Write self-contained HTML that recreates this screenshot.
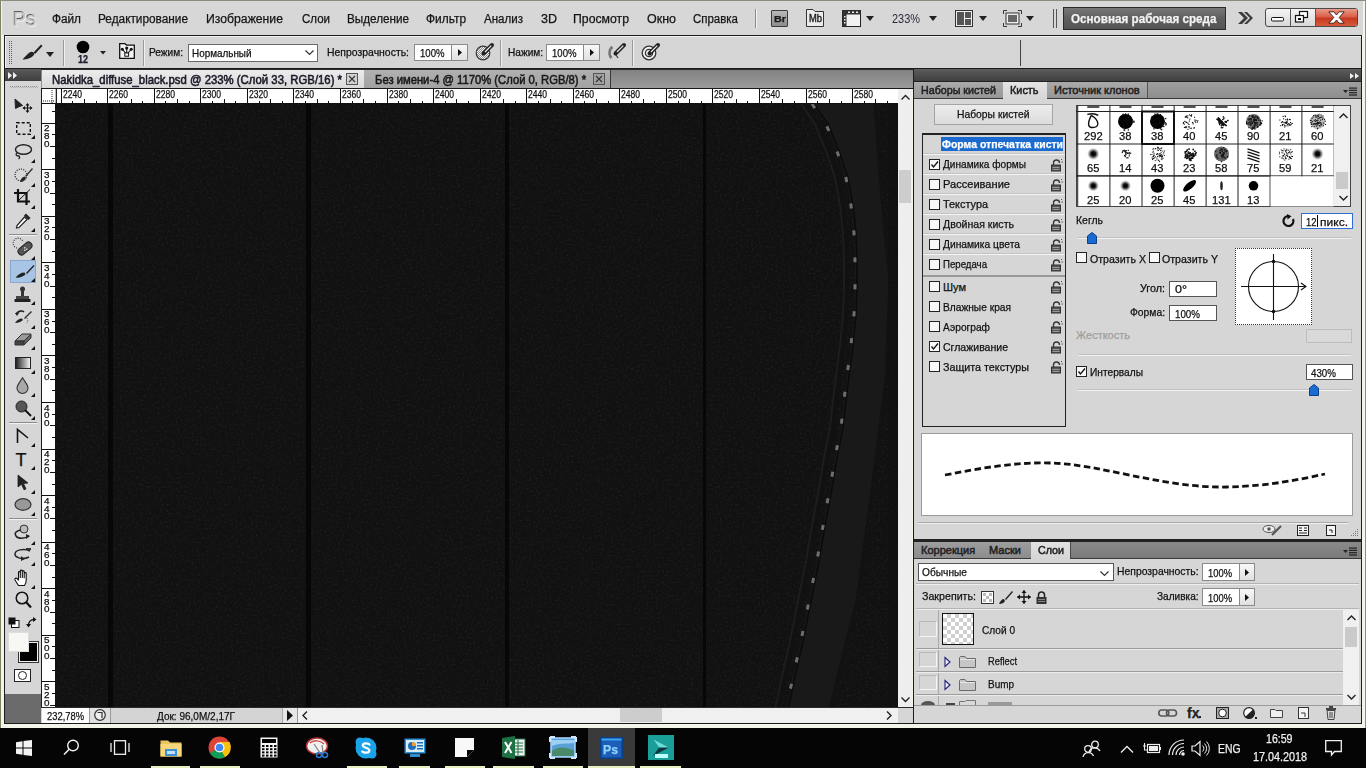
<!DOCTYPE html><html><head><meta charset="utf-8"><style>
*{margin:0;padding:0;box-sizing:border-box}
html,body{width:1366px;height:768px;overflow:hidden;background:#eef0e0;font-family:"Liberation Sans",sans-serif;font-size:12px;color:#111}
.a{position:absolute}
.t{position:absolute;white-space:nowrap;line-height:normal;-webkit-text-stroke:0.25px currentColor}
svg.a{overflow:visible}
</style></head><body>
<div class="a" style="left:0px;top:0px;width:1366px;height:728px;background:#f4f4ea"></div>
<div class="a" style="left:0px;top:0px;width:1px;height:728px;background:#7c8262"></div>
<div class="a" style="left:0px;top:0px;width:1366px;height:1px;background:#8c8c7c"></div>
<div class="a" style="left:1365px;top:0px;width:1px;height:728px;background:#8a9070"></div>
<div class="a" style="left:2px;top:1px;width:1361px;height:34px;background:#d7d7d7"></div>
<div class="t" style="left:12.50px;top:7.00px;font-size:21px;font-weight:normal;color:#c6c6c6;transform:scaleX(0.9385);transform-origin:0 0;text-shadow:-0.8px -0.8px 0 #5a5a5a,0.8px 0.8px 0 #f6f6f6;">Ps</div>
<div class="t" style="left:52.00px;top:12.14px;font-size:12px;font-weight:normal;color:#151515;transform:scaleX(0.9830);transform-origin:0 0;">Файл</div>
<div class="t" style="left:97.50px;top:12.14px;font-size:12px;font-weight:normal;color:#151515;transform:scaleX(0.9846);transform-origin:0 0;">Редактирование</div>
<div class="t" style="left:206.00px;top:12.14px;font-size:12px;font-weight:normal;color:#151515;transform:scaleX(1.0186);transform-origin:0 0;">Изображение</div>
<div class="t" style="left:301.50px;top:12.14px;font-size:12px;font-weight:normal;color:#151515;transform:scaleX(0.9596);transform-origin:0 0;">Слои</div>
<div class="t" style="left:347.00px;top:12.14px;font-size:12px;font-weight:normal;color:#151515;transform:scaleX(0.9751);transform-origin:0 0;">Выделение</div>
<div class="t" style="left:425.80px;top:12.14px;font-size:12px;font-weight:normal;color:#151515;transform:scaleX(0.9922);transform-origin:0 0;">Фильтр</div>
<div class="t" style="left:484.00px;top:12.14px;font-size:12px;font-weight:normal;color:#151515;transform:scaleX(0.9627);transform-origin:0 0;">Анализ</div>
<div class="t" style="left:541.00px;top:12.14px;font-size:12px;font-weight:normal;color:#151515;transform:scaleX(1.0430);transform-origin:0 0;">3D</div>
<div class="t" style="left:573.00px;top:12.14px;font-size:12px;font-weight:normal;color:#151515;transform:scaleX(1.0218);transform-origin:0 0;">Просмотр</div>
<div class="t" style="left:647.00px;top:12.14px;font-size:12px;font-weight:normal;color:#151515;transform:scaleX(1.0400);transform-origin:0 0;">Окно</div>
<div class="t" style="left:693.00px;top:12.14px;font-size:12px;font-weight:normal;color:#151515;transform:scaleX(0.9559);transform-origin:0 0;">Справка</div>
<div class="a" style="left:755px;top:9px;width:1px;height:19px;background:#8a8a8a"></div>
<div class="a" style="left:756px;top:9px;width:1px;height:19px;background:#f4f4f4"></div>
<div class="a" style="left:771px;top:10px;width:17px;height:17px;border:1px solid #3a3a3a;background:linear-gradient(#b8b8b8,#8c8c8c);border-radius:1px"></div>
<div class="t" style="left:773.50px;top:13.86px;font-size:9px;font-weight:bold;color:#1a1a1a;transform:scaleX(1.1998);transform-origin:0 0;">Br</div>
<svg class="a" style="left:806px;top:9px;" width="18" height="18" viewBox="0 0 18 18"><path d="M0.5 17.5V0.5H7L9 2.5H17.5V17.5Z" fill="#ececec" stroke="#333"/></svg>
<div class="t" style="left:808.50px;top:13.45px;font-size:10px;font-weight:normal;color:#222;transform:scaleX(0.9358);transform-origin:0 0;-webkit-text-stroke:0.4px currentColor;">Mb</div>
<svg class="a" style="left:842px;top:10px;" width="19" height="17" viewBox="0 0 19 17"><rect x="0.5" y="0.5" width="18" height="16" fill="#f2f2f2" stroke="#222"/><rect x="0.5" y="0.5" width="4" height="16" fill="#333"/><rect x="0.5" y="0.5" width="18" height="4" fill="#333"/><g fill="#eee"><rect x="2" y="6" width="1.5" height="1.5"/><rect x="2" y="9" width="1.5" height="1.5"/><rect x="2" y="12" width="1.5" height="1.5"/><rect x="6" y="1.5" width="2" height="1.5"/><rect x="10" y="1.5" width="2" height="1.5"/><rect x="14" y="1.5" width="2" height="1.5"/></g></svg>
<svg class="a" style="left:866px;top:16px;" width="8" height="5" viewBox="0 0 8 5"><path d="M0 0H8L4 5Z" fill="#222"/></svg>
<div class="t" style="left:892.00px;top:11.64px;font-size:12px;font-weight:normal;color:#2a2a3a;transform:scaleX(0.9123);transform-origin:0 0;-webkit-text-stroke:0px;">233%</div>
<svg class="a" style="left:929px;top:16px;" width="8" height="5" viewBox="0 0 8 5"><path d="M0 0H8L4 5Z" fill="#222"/></svg>
<svg class="a" style="left:955px;top:10px;" width="18" height="17" viewBox="0 0 18 17"><rect x="0.5" y="0.5" width="17" height="16" fill="#eee" stroke="#333"/><rect x="2" y="2" width="7" height="13" fill="#555"/><rect x="10" y="2" width="6" height="6" fill="#555"/><rect x="10" y="9" width="6" height="6" fill="#555"/></svg>
<svg class="a" style="left:979px;top:16px;" width="8" height="5" viewBox="0 0 8 5"><path d="M0 0H8L4 5Z" fill="#222"/></svg>
<svg class="a" style="left:1003px;top:10px;" width="19" height="17" viewBox="0 0 19 17"><path d="M0.5 4V0.5H4M15 0.5H18.5V4M18.5 13V16.5H15M4 16.5H0.5V13" fill="none" stroke="#333"/><rect x="3" y="3" width="13" height="11" fill="#eee" stroke="#333"/><rect x="5" y="5" width="9" height="7" fill="#666"/></svg>
<svg class="a" style="left:1026px;top:16px;" width="8" height="5" viewBox="0 0 8 5"><path d="M0 0H8L4 5Z" fill="#222"/></svg>
<div class="a" style="left:1053px;top:9px;width:1px;height:19px;background:#555"></div>
<div class="a" style="left:1056px;top:9px;width:1px;height:19px;background:#555"></div>
<div class="a" style="left:1063px;top:7px;width:163px;height:23px;border:1px solid #2a2a2a;background:linear-gradient(#777,#5e5e5e 50%,#545454);"></div>
<div class="t" style="left:1071.00px;top:12.14px;font-size:12px;font-weight:bold;color:#f2f2f2;transform:scaleX(0.9725);transform-origin:0 0;">Основная рабочая среда</div>
<svg class="a" style="left:1237px;top:11px;" width="16" height="14" viewBox="0 0 16 14"><path d="M1 1L7 7L1 13H5L11 7L5 1Z M7 1L13 7L7 13H10L16 7L10 1Z" fill="#3a3a3a"/></svg>
<div class="a" style="left:1265px;top:8px;width:93px;height:19px;border:1px solid #4a4a4a;border-radius:3px;background:linear-gradient(#f4f4f4,#d8d8d8);overflow:hidden"><div class="a" style="left:50px;top:0;width:41px;height:17px;background:linear-gradient(#e89a88 0%,#d9604a 45%,#c63a22 55%,#d85a3a 100%)"></div><div class="a" style="left:24px;top:0;width:1px;height:17px;background:#555"></div><div class="a" style="left:49px;top:0;width:1px;height:17px;background:#555"></div></div>
<svg class="a" style="left:1271px;top:17px;" width="14" height="5" viewBox="0 0 14 5"><rect x="0.5" y="0.5" width="12" height="3.5" fill="#fff" stroke="#111" rx="1"/></svg>
<svg class="a" style="left:1295px;top:11px;" width="14" height="12" viewBox="0 0 14 12"><rect x="4.5" y="0.5" width="8" height="6" fill="#fff" stroke="#111" stroke-width="1.2"/><rect x="0.5" y="4.5" width="8" height="6.5" fill="#fff" stroke="#111" stroke-width="1.2"/><rect x="3" y="7" width="3" height="2" fill="#111"/></svg>
<svg class="a" style="left:1328px;top:11px;" width="17" height="13" viewBox="0 0 17 13"><path d="M0.8 0.8H6L8.5 4L11 0.8H16.2L11.2 6.5L16.2 12.2H11L8.5 9L6 12.2H0.8L5.8 6.5Z" fill="#fff" stroke="#3a1a10" stroke-width="0.9"/></svg>
<div class="a" style="left:4px;top:35px;width:1358px;height:34px;background:#1c1c1c"></div>
<div class="a" style="left:5px;top:36px;width:1356px;height:32px;background:#d5d5d5;border-top:1px solid #f2f2f2;border-left:1px solid #f2f2f2"></div>
<svg class="a" style="left:9px;top:41px;" width="4" height="24" viewBox="0 0 4 24"><rect x="0" y="0" width="1" height="1" fill="#666"/><rect x="2" y="0" width="1" height="1" fill="#666"/><rect x="0" y="2" width="1" height="1" fill="#666"/><rect x="2" y="2" width="1" height="1" fill="#666"/><rect x="0" y="4" width="1" height="1" fill="#666"/><rect x="2" y="4" width="1" height="1" fill="#666"/><rect x="0" y="6" width="1" height="1" fill="#666"/><rect x="2" y="6" width="1" height="1" fill="#666"/><rect x="0" y="8" width="1" height="1" fill="#666"/><rect x="2" y="8" width="1" height="1" fill="#666"/><rect x="0" y="10" width="1" height="1" fill="#666"/><rect x="2" y="10" width="1" height="1" fill="#666"/><rect x="0" y="12" width="1" height="1" fill="#666"/><rect x="2" y="12" width="1" height="1" fill="#666"/><rect x="0" y="14" width="1" height="1" fill="#666"/><rect x="2" y="14" width="1" height="1" fill="#666"/><rect x="0" y="16" width="1" height="1" fill="#666"/><rect x="2" y="16" width="1" height="1" fill="#666"/><rect x="0" y="18" width="1" height="1" fill="#666"/><rect x="2" y="18" width="1" height="1" fill="#666"/><rect x="0" y="20" width="1" height="1" fill="#666"/><rect x="2" y="20" width="1" height="1" fill="#666"/><rect x="0" y="22" width="1" height="1" fill="#666"/><rect x="2" y="22" width="1" height="1" fill="#666"/></svg>
<svg class="a" style="left:22px;top:44px;" width="20" height="16" viewBox="0 0 20 16"><path d="M19 0.5L11.5 8.5L13 10L20.5 2Z" fill="#222"/><path d="M0.5 15.5C4 15.8 8.5 14.5 11 12C12.5 10.5 12.5 9.5 11.5 8.5C10.5 7.5 9 7.5 7.5 8.5C5 10 3 13 0.5 15.5Z" fill="#222"/></svg>
<svg class="a" style="left:46px;top:52px;" width="8" height="5" viewBox="0 0 8 5"><path d="M0 0H8L4 5Z" fill="#222"/></svg>
<div class="a" style="left:63px;top:40px;width:1px;height:26px;background:#9a9a9a"></div>
<div class="a" style="left:64px;top:40px;width:1px;height:26px;background:#f0f0f0"></div>
<svg class="a" style="left:76px;top:40px;" width="14" height="14" viewBox="0 0 14 14"><circle cx="7" cy="7" r="6.3" fill="#000"/></svg>
<div class="t" style="left:78.00px;top:53.75px;font-size:10px;font-weight:bold;color:#1a1a2a;transform:scaleX(0.8990);transform-origin:0 0;">12</div>
<svg class="a" style="left:100px;top:51px;" width="6" height="4" viewBox="0 0 6 4"><path d="M0 0H6L3 3.5Z" fill="#222"/></svg>
<svg class="a" style="left:119px;top:43px;" width="16" height="16" viewBox="0 0 16 16"><path d="M0.7 15.3V0.7H6L7.5 2.2H15.3V15.3Z" fill="#f4f4f4" stroke="#111" stroke-width="1.3"/><path d="M7.7 6V11M3.5 6.5L6.5 10M12 6.5L9 10" stroke="#111" stroke-width="1.1"/><circle cx="7.7" cy="5" r="1.6" fill="#111"/><circle cx="3.3" cy="6.3" r="1.5" fill="#111"/><circle cx="12.2" cy="6.3" r="1.5" fill="#111"/><rect x="5.8" y="10" width="3.8" height="3.2" fill="#fff" stroke="#111"/></svg>
<div class="a" style="left:143px;top:40px;width:1px;height:26px;background:#9a9a9a"></div>
<div class="a" style="left:144px;top:40px;width:1px;height:26px;background:#f0f0f0"></div>
<div class="t" style="left:149.00px;top:46.05px;font-size:11px;font-weight:normal;color:#111;transform:scaleX(0.9197);transform-origin:0 0;">Режим:</div>
<div class="a" style="left:188px;top:44px;width:130px;height:18px;background:#fff;border:1px solid #6a6a6a"></div>
<div class="t" style="left:192.00px;top:47.05px;font-size:11px;font-weight:normal;color:#111;transform:scaleX(0.8997);transform-origin:0 0;">Нормальный</div>
<svg class="a" style="left:305px;top:50px;" width="9" height="5" viewBox="0 0 9 5"><path d="M0.5 0.5L4.5 4.5L8.5 0.5" fill="none" stroke="#333" stroke-width="1.2"/></svg>
<div class="t" style="left:327.40px;top:46.05px;font-size:11px;font-weight:normal;color:#111;transform:scaleX(0.9489);transform-origin:0 0;">Непрозрачность:</div>
<div class="a" style="left:414px;top:44px;width:54px;height:17px;background:#fff;border:1px solid #8a8a8a"></div>
<div class="a" style="left:451px;top:44px;width:17px;height:17px;background:linear-gradient(#f8f8f8,#e0e0e0);border:1px solid #8a8a8a"></div>
<svg class="a" style="left:458px;top:49px;" width="4" height="7" viewBox="0 0 4 7"><path d="M0 0L4 3.5L0 7Z" fill="#111"/></svg>
<div class="t" style="left:420.00px;top:47.05px;font-size:11px;font-weight:normal;color:#111;transform:scaleX(0.8708);transform-origin:0 0;">100%</div>
<svg class="a" style="left:475px;top:42px;" width="20" height="20" viewBox="0 0 20 20"><defs><pattern id="ck" width="2" height="2" patternUnits="userSpaceOnUse"><rect width="2" height="2" fill="#f4f4f4"/><rect width="1" height="1" fill="#8a8a8a"/><rect x="1" y="1" width="1" height="1" fill="#8a8a8a"/></pattern></defs><circle cx="8" cy="11" r="6.8" fill="url(#ck)" stroke="#333" stroke-width="1.2"/><path d="M8.5 11.5L17 3" stroke="#222" stroke-width="4" stroke-linecap="round"/><path d="M10 10L16.3 3.7" stroke="#eee" stroke-width="1.2"/><path d="M7.5 12.5L9.5 10.5" stroke="#222" stroke-width="2"/></svg>
<div class="a" style="left:500px;top:40px;width:1px;height:26px;background:#9a9a9a"></div>
<div class="a" style="left:501px;top:40px;width:1px;height:26px;background:#f0f0f0"></div>
<div class="t" style="left:507.70px;top:46.05px;font-size:11px;font-weight:normal;color:#111;transform:scaleX(0.9166);transform-origin:0 0;">Нажим:</div>
<div class="a" style="left:546px;top:44px;width:54px;height:17px;background:#fff;border:1px solid #8a8a8a"></div>
<div class="a" style="left:583px;top:44px;width:17px;height:17px;background:linear-gradient(#f8f8f8,#e0e0e0);border:1px solid #8a8a8a"></div>
<svg class="a" style="left:590px;top:49px;" width="4" height="7" viewBox="0 0 4 7"><path d="M0 0L4 3.5L0 7Z" fill="#111"/></svg>
<div class="t" style="left:552.00px;top:47.05px;font-size:11px;font-weight:normal;color:#111;transform:scaleX(0.8708);transform-origin:0 0;">100%</div>
<svg class="a" style="left:607px;top:42px;" width="20" height="20" viewBox="0 0 20 20"><path d="M5.5 5C2 7 1.5 13 4.5 16" stroke="#777" stroke-width="2.6" fill="none"/><path d="M8.5 11.5L17 3" stroke="#222" stroke-width="4" stroke-linecap="round"/><path d="M10 10L16.3 3.7" stroke="#eee" stroke-width="1.2"/><path d="M7.5 12.5L9.5 10.5" stroke="#222" stroke-width="2"/><path d="M9 13L11 16" stroke="#333" stroke-width="1.2"/></svg>
<div class="a" style="left:632px;top:40px;width:1px;height:26px;background:#9a9a9a"></div>
<div class="a" style="left:633px;top:40px;width:1px;height:26px;background:#f0f0f0"></div>
<svg class="a" style="left:641px;top:42px;" width="20" height="20" viewBox="0 0 20 20"><circle cx="8" cy="11" r="6.8" fill="#f4f4f4" stroke="#333" stroke-width="1.3"/><circle cx="8" cy="11" r="3.6" fill="none" stroke="#333" stroke-width="1.3"/><path d="M8.5 11.5L17 3" stroke="#222" stroke-width="4" stroke-linecap="round"/><path d="M10 10L16.3 3.7" stroke="#eee" stroke-width="1.2"/><path d="M7.5 12.5L9.5 10.5" stroke="#222" stroke-width="2"/></svg>
<div class="a" style="left:1020px;top:40px;width:1px;height:26px;background:#444"></div>
<div class="a" style="left:4px;top:68px;width:38px;height:656px;background:#1c1c1c"></div>
<div class="a" style="left:5px;top:69px;width:36px;height:654px;background:#d6d6d6"></div>
<div class="a" style="left:5px;top:69px;width:36px;height:12px;background:linear-gradient(#5a5a5a,#3e3e3e)"></div>
<svg class="a" style="left:8px;top:72px;" width="12" height="7" viewBox="0 0 12 7"><path d="M0 0L4 3.5L0 7Z M5 0L9 3.5L5 7Z" fill="#f0f0f0"/></svg>
<svg class="a" style="left:10px;top:86px;" width="28" height="2" viewBox="0 0 28 2"><rect x="0" y="0" width="1" height="1" fill="#8a8a8a"/><rect x="1" y="1" width="1" height="1" fill="#b0b0b0"/><rect x="2" y="0" width="1" height="1" fill="#8a8a8a"/><rect x="3" y="1" width="1" height="1" fill="#b0b0b0"/><rect x="4" y="0" width="1" height="1" fill="#8a8a8a"/><rect x="5" y="1" width="1" height="1" fill="#b0b0b0"/><rect x="6" y="0" width="1" height="1" fill="#8a8a8a"/><rect x="7" y="1" width="1" height="1" fill="#b0b0b0"/><rect x="8" y="0" width="1" height="1" fill="#8a8a8a"/><rect x="9" y="1" width="1" height="1" fill="#b0b0b0"/><rect x="10" y="0" width="1" height="1" fill="#8a8a8a"/><rect x="11" y="1" width="1" height="1" fill="#b0b0b0"/><rect x="12" y="0" width="1" height="1" fill="#8a8a8a"/><rect x="13" y="1" width="1" height="1" fill="#b0b0b0"/><rect x="14" y="0" width="1" height="1" fill="#8a8a8a"/><rect x="15" y="1" width="1" height="1" fill="#b0b0b0"/><rect x="16" y="0" width="1" height="1" fill="#8a8a8a"/><rect x="17" y="1" width="1" height="1" fill="#b0b0b0"/><rect x="18" y="0" width="1" height="1" fill="#8a8a8a"/><rect x="19" y="1" width="1" height="1" fill="#b0b0b0"/><rect x="20" y="0" width="1" height="1" fill="#8a8a8a"/><rect x="21" y="1" width="1" height="1" fill="#b0b0b0"/><rect x="22" y="0" width="1" height="1" fill="#8a8a8a"/><rect x="23" y="1" width="1" height="1" fill="#b0b0b0"/><rect x="24" y="0" width="1" height="1" fill="#8a8a8a"/><rect x="25" y="1" width="1" height="1" fill="#b0b0b0"/><rect x="26" y="0" width="1" height="1" fill="#8a8a8a"/><rect x="27" y="1" width="1" height="1" fill="#b0b0b0"/></svg>
<div class="a" style="left:5px;top:694px;width:36px;height:29px;background:#6b6b6b"></div>
<div class="a" style="left:9px;top:234px;width:28px;height:1px;background:#8c8c8c"></div>
<div class="a" style="left:9px;top:235px;width:28px;height:1px;background:#f2f2f2"></div>
<div class="a" style="left:9px;top:422px;width:28px;height:1px;background:#8c8c8c"></div>
<div class="a" style="left:9px;top:423px;width:28px;height:1px;background:#f2f2f2"></div>
<div class="a" style="left:9px;top:518px;width:28px;height:1px;background:#8c8c8c"></div>
<div class="a" style="left:9px;top:519px;width:28px;height:1px;background:#f2f2f2"></div>
<svg class="a" style="left:14px;top:98px;" width="19" height="15" viewBox="0 0 19 15"><path d="M1 1L8.6 7.5L6 8.2L1.5 10.5Z" fill="#222" stroke="#222" stroke-width="1"/><path d="M13.5 6V14M9.5 10H17.5" stroke="#111" stroke-width="1.2"/><path d="M13.5 5L11.5 7.5H15.5Z M13.5 15L11.5 12.5H15.5Z M8.5 10L11 8V12Z M18.5 10L16 8V12Z" fill="#111"/></svg>
<svg class="a" style="left:16px;top:122px;" width="15" height="13" viewBox="0 0 15 13"><rect x="0.7" y="0.7" width="13.6" height="11.6" fill="none" stroke="#111" stroke-width="1.4" stroke-dasharray="3 2"/></svg>
<svg class="a" style="left:31px;top:135px;" width="4" height="4" viewBox="0 0 4 4"><path d="M4 0V4H0Z" fill="#111"/></svg>
<svg class="a" style="left:14px;top:144px;" width="18" height="16" viewBox="0 0 18 16"><ellipse cx="9.5" cy="5.5" rx="8" ry="4.8" fill="none" stroke="#222" stroke-width="1.4"/><path d="M3.5 8.5C1 10 2 12 4.5 12C6 12 6 14 4.5 15" fill="none" stroke="#222" stroke-width="1.3"/></svg>
<svg class="a" style="left:31px;top:159px;" width="4" height="4" viewBox="0 0 4 4"><path d="M4 0V4H0Z" fill="#111"/></svg>
<svg class="a" style="left:14px;top:167px;" width="19" height="16" viewBox="0 0 19 16"><circle cx="7" cy="8" r="6" fill="none" stroke="#222" stroke-width="1.2" stroke-dasharray="1 1.3"/><path d="M18 1L11 9L12 10L19 2Z" fill="#333"/><path d="M6 15C9 15 11 13 12 11L10.5 9.5C8 10 7 12 6 15Z" fill="#222"/></svg>
<svg class="a" style="left:31px;top:183px;" width="4" height="4" viewBox="0 0 4 4"><path d="M4 0V4H0Z" fill="#111"/></svg>
<svg class="a" style="left:14px;top:189px;" width="17" height="16" viewBox="0 0 17 16"><path d="M4 0V12.5H16M0 4H12.5V16" fill="none" stroke="#111" stroke-width="2.2"/><path d="M4.5 11.5L16 0.5" stroke="#111" stroke-width="1"/></svg>
<svg class="a" style="left:31px;top:205px;" width="4" height="4" viewBox="0 0 4 4"><path d="M4 0V4H0Z" fill="#111"/></svg>
<svg class="a" style="left:15px;top:212px;" width="17" height="17" viewBox="0 0 17 17"><path d="M11 1.5L15.5 6L13.5 8L9 3.5Z" fill="#222"/><path d="M9.5 5L12 7.5L4 15.5L1.5 16L2 13.5Z" fill="#fff" stroke="#222" stroke-width="1.2"/></svg>
<svg class="a" style="left:31px;top:228px;" width="4" height="4" viewBox="0 0 4 4"><path d="M4 0V4H0Z" fill="#111"/></svg>
<svg class="a" style="left:14px;top:239px;" width="19" height="17" viewBox="0 0 19 17"><path d="M3 9A5 5 0 1 1 9 3" fill="none" stroke="#222" stroke-width="1.1" stroke-dasharray="1 1.3"/><rect x="3" y="6" width="16" height="7" rx="3.5" fill="#555" stroke="#222" transform="rotate(-40 11 9.5)"/><g fill="#ccc"><rect x="10" y="8" width="1.5" height="1.5"/><rect x="12" y="9.5" width="1.5" height="1.5"/><rect x="10" y="10.5" width="1.5" height="1.5"/></g></svg>
<svg class="a" style="left:31px;top:256px;" width="4" height="4" viewBox="0 0 4 4"><path d="M4 0V4H0Z" fill="#111"/></svg>
<div class="a" style="left:10px;top:260px;width:26px;height:23px;background:#a9c5e6;border:1px solid #86a7cf"></div>
<svg class="a" style="left:15px;top:264px;" width="19" height="15" viewBox="0 0 19 15"><path d="M18.5 1L11 9L12 10L19.5 2Z" fill="#222"/><path d="M0.5 13.5C4 14 8 13 10.5 10.5L9.5 8.5C6 8.5 3 10.5 0.5 13.5Z" fill="#222"/></svg>
<svg class="a" style="left:31px;top:278px;" width="4" height="4" viewBox="0 0 4 4"><path d="M4 0V4H0Z" fill="#111"/></svg>
<svg class="a" style="left:14px;top:286px;" width="17" height="17" viewBox="0 0 17 17"><circle cx="8.5" cy="3" r="2.5" fill="#333"/><rect x="7" y="4" width="3" height="6" fill="#333"/><path d="M2 10H15V13H2Z" fill="#444"/><rect x="0.5" y="13" width="16" height="3" fill="#222"/></svg>
<svg class="a" style="left:31px;top:301px;" width="4" height="4" viewBox="0 0 4 4"><path d="M4 0V4H0Z" fill="#111"/></svg>
<svg class="a" style="left:14px;top:310px;" width="18" height="15" viewBox="0 0 18 15"><path d="M2 4C4 1 8 0 10 2" fill="none" stroke="#222" stroke-width="1.6"/><path d="M1 3L3 6L5 3Z" fill="#222"/><path d="M17 1L10 8L11 9L18 2Z" fill="#333"/><path d="M1 13C4 13 7 12 9 10L8 8.5C5 8.5 3 10 1 13Z" fill="#222"/><path d="M13 8L14 11L12.5 13.5" fill="none" stroke="#555" stroke-width="1" stroke-dasharray="1 1"/></svg>
<svg class="a" style="left:31px;top:325px;" width="4" height="4" viewBox="0 0 4 4"><path d="M4 0V4H0Z" fill="#111"/></svg>
<svg class="a" style="left:14px;top:332px;" width="18" height="14" viewBox="0 0 18 14"><path d="M1 9L8 2H17L10 9Z" fill="#999" stroke="#333"/><path d="M1 9H10V13H1Z" fill="#444" stroke="#333"/><path d="M10 9L17 2V6L10 13Z" fill="#666" stroke="#333"/></svg>
<svg class="a" style="left:31px;top:346px;" width="4" height="4" viewBox="0 0 4 4"><path d="M4 0V4H0Z" fill="#111"/></svg>
<div class="a" style="left:15px;top:357px;width:16px;height:12px;border:1px solid #222;background:linear-gradient(90deg,#222,#f4f4f4)"></div>
<svg class="a" style="left:31px;top:370px;" width="4" height="4" viewBox="0 0 4 4"><path d="M4 0V4H0Z" fill="#111"/></svg>
<svg class="a" style="left:16px;top:377px;" width="13" height="17" viewBox="0 0 13 17"><path d="M6.5 0.8C4 5 1 8 1 11A5.5 5.5 0 0 0 12 11C12 8 9 5 6.5 0.8Z" fill="#a8a8a8" stroke="#333" stroke-width="1.1"/></svg>
<svg class="a" style="left:31px;top:393px;" width="4" height="4" viewBox="0 0 4 4"><path d="M4 0V4H0Z" fill="#111"/></svg>
<svg class="a" style="left:15px;top:400px;" width="17" height="17" viewBox="0 0 17 17"><circle cx="6.5" cy="6.5" r="5.5" fill="#555" stroke="#222"/><path d="M10 10L16 16" stroke="#111" stroke-width="2"/></svg>
<svg class="a" style="left:31px;top:416px;" width="4" height="4" viewBox="0 0 4 4"><path d="M4 0V4H0Z" fill="#111"/></svg>
<svg class="a" style="left:16px;top:428px;" width="14" height="15" viewBox="0 0 14 15"><path d="M1.5 15V1.5L12 10" fill="none" stroke="#111" stroke-width="1.6"/></svg>
<svg class="a" style="left:31px;top:443px;" width="4" height="4" viewBox="0 0 4 4"><path d="M4 0V4H0Z" fill="#111"/></svg>
<div class="t" style="left:15.50px;top:449.71px;font-size:18px;font-weight:normal;color:#111;font-family:"Liberation Serif",sans-serif;transform:scaleX(1.2733);transform-origin:0 0;">T</div>
<svg class="a" style="left:31px;top:466px;" width="4" height="4" viewBox="0 0 4 4"><path d="M4 0V4H0Z" fill="#111"/></svg>
<svg class="a" style="left:17px;top:474px;" width="12" height="16" viewBox="0 0 12 16"><path d="M1 1L11 9L6.5 9.5L9 15L7 15.8L4.5 10.3L1 13Z" fill="#222" stroke="#222" stroke-width="0.8"/></svg>
<svg class="a" style="left:31px;top:490px;" width="4" height="4" viewBox="0 0 4 4"><path d="M4 0V4H0Z" fill="#111"/></svg>
<svg class="a" style="left:14px;top:498px;" width="18" height="13" viewBox="0 0 18 13"><ellipse cx="9" cy="6.5" rx="8" ry="5.8" fill="#999" stroke="#333" stroke-width="1.2"/></svg>
<svg class="a" style="left:31px;top:512px;" width="4" height="4" viewBox="0 0 4 4"><path d="M4 0V4H0Z" fill="#111"/></svg>
<svg class="a" style="left:13px;top:524px;" width="19" height="17" viewBox="0 0 19 17"><circle cx="11" cy="5" r="4" fill="#bbb" stroke="#333"/><path d="M8 6C3 7 1 9 3 12C5 15 12 15 16 12" fill="none" stroke="#222" stroke-width="1.5"/><path d="M13 10L17 12L13 15Z" fill="#222"/></svg>
<svg class="a" style="left:31px;top:541px;" width="4" height="4" viewBox="0 0 4 4"><path d="M4 0V4H0Z" fill="#111"/></svg>
<svg class="a" style="left:13px;top:547px;" width="19" height="15" viewBox="0 0 19 15"><path d="M17 4C11 1 2 3 2 7C2 11 10 13 16 10" fill="none" stroke="#222" stroke-width="1.5"/><path d="M8 9L12 12L8 14Z" fill="#222"/><rect x="13" y="1" width="5" height="2" fill="#333"/></svg>
<svg class="a" style="left:31px;top:562px;" width="4" height="4" viewBox="0 0 4 4"><path d="M4 0V4H0Z" fill="#111"/></svg>
<svg class="a" style="left:14px;top:569px;" width="17" height="17" viewBox="0 0 17 17"><path d="M4.5 16.5L1 11C0.5 10 1.5 8.5 3 9.5L4.5 11L4.5 3.5C4.5 2.3 6.3 2.3 6.3 3.5L6.3 8.5L6.3 2C6.3 0.8 8.3 0.8 8.3 2L8.3 8.5L8.3 2.8C8.3 1.6 10.2 1.6 10.2 2.8L10.2 8.8L10.2 4.5C10.2 3.3 12.2 3.3 12.2 4.5L12.2 11C12.2 13.5 11.5 15 10.5 16.5Z" fill="#fff" stroke="#111" stroke-width="1.1" stroke-linejoin="round"/></svg>
<svg class="a" style="left:31px;top:585px;" width="4" height="4" viewBox="0 0 4 4"><path d="M4 0V4H0Z" fill="#111"/></svg>
<svg class="a" style="left:15px;top:591px;" width="17" height="18" viewBox="0 0 17 18"><circle cx="7" cy="7" r="5.8" fill="none" stroke="#111" stroke-width="1.5"/><path d="M11 11L16 16.5" stroke="#111" stroke-width="2.2"/></svg>
<svg class="a" style="left:8px;top:617px;" width="12" height="11" viewBox="0 0 12 11"><rect x="3.5" y="3.5" width="7.5" height="7" fill="#fff" stroke="#111"/><rect x="0.5" y="0.5" width="7" height="7" fill="#111"/></svg>
<svg class="a" style="left:26px;top:617px;" width="11" height="11" viewBox="0 0 11 11"><path d="M2.5 8.5C2.5 5 4.5 2.5 8.5 2.5" fill="none" stroke="#111" stroke-width="1.3"/><path d="M0 7L2.5 10.5L5 7Z M7 0L10.5 2.5L7 5Z" fill="#111"/></svg>
<div class="a" style="left:19px;top:642px;width:19px;height:20px;background:#000;border:1px solid #f0f0f0;outline:1px solid #333"></div>
<div class="a" style="left:8px;top:632px;width:21px;height:20px;background:#f7f7f4;border:1px solid #ddd"></div>
<svg class="a" style="left:14px;top:669px;" width="17" height="13" viewBox="0 0 17 13"><rect x="0.5" y="0.5" width="16" height="12" fill="#fff" stroke="#222"/><circle cx="8.5" cy="6.5" r="4" fill="#fff" stroke="#222"/></svg>
<div class="a" style="left:41px;top:69px;width:872px;height:20px;background:linear-gradient(#808080,#9c9c9c)"></div>
<div class="a" style="left:41px;top:69px;width:872px;height:1px;background:#2a2a2a"></div>
<div class="a" style="left:42px;top:70px;width:322px;height:19px;background:linear-gradient(#ececec,#d8d8d8)"></div>
<div class="a" style="left:364px;top:70px;width:246px;height:19px;background:linear-gradient(#b0b0b0,#a2a2a2)"></div>
<div class="a" style="left:610px;top:70px;width:1px;height:19px;background:#3a3a3a"></div>
<div class="t" style="left:51.60px;top:72.94px;font-size:12px;font-weight:normal;color:#1a1a28;transform:scaleX(0.9458);transform-origin:0 0;-webkit-text-stroke:0.55px currentColor;">Nakidka_diffuse_black.psd @ 233% (Слой 33, RGB/16) *</div>
<div class="t" style="left:374.60px;top:72.94px;font-size:12px;font-weight:normal;color:#1a1a1a;transform:scaleX(0.9367);transform-origin:0 0;-webkit-text-stroke:0.55px currentColor;">Без имени-4 @ 1170% (Слой 0, RGB/8) *</div>
<div class="a" style="left:346px;top:73px;width:12px;height:12px;border:1px solid #555;background:#d0d0d0"></div>
<svg class="a" style="left:348px;top:75px;" width="8" height="8" viewBox="0 0 8 8"><path d="M1 1L7 7M7 1L1 7" stroke="#333" stroke-width="1.1"/></svg>
<div class="a" style="left:593px;top:73px;width:12px;height:12px;border:1px solid #555;background:#a0a0a0"></div>
<svg class="a" style="left:595px;top:75px;" width="8" height="8" viewBox="0 0 8 8"><path d="M1 1L7 7M7 1L1 7" stroke="#333" stroke-width="1.1"/></svg>
<div class="a" style="left:41px;top:88px;width:872px;height:1px;background:#1a1a1a"></div>
<div class="a" style="left:42px;top:89px;width:856px;height:15px;background:#fff"></div>
<div class="a" style="left:42px;top:104px;width:14px;height:603px;background:#fff"></div>
<div class="a" style="left:56px;top:89px;width:1px;height:15px;background:#222"></div>
<svg class="a" style="left:42px;top:89px;" width="14" height="15" viewBox="0 0 14 15"><path d="M10 1V14M1 12H13" stroke="#222" stroke-dasharray="1 1" fill="none"/><rect x="13" y="0" width="1" height="15" fill="#bbb"/></svg>
<svg class="a" style="left:57px;top:89px;" width="841" height="15" viewBox="0 0 841 15"><rect x="4" y="0" width="1" height="15" fill="#111"/><rect x="15" y="12" width="1" height="3" fill="#111"/><rect x="27" y="10" width="1" height="5" fill="#111"/><rect x="39" y="12" width="1" height="3" fill="#111"/><rect x="50" y="0" width="1" height="15" fill="#111"/><rect x="62" y="12" width="1" height="3" fill="#111"/><rect x="74" y="10" width="1" height="5" fill="#111"/><rect x="85" y="12" width="1" height="3" fill="#111"/><rect x="97" y="0" width="1" height="15" fill="#111"/><rect x="108" y="12" width="1" height="3" fill="#111"/><rect x="120" y="10" width="1" height="5" fill="#111"/><rect x="132" y="12" width="1" height="3" fill="#111"/><rect x="143" y="0" width="1" height="15" fill="#111"/><rect x="155" y="12" width="1" height="3" fill="#111"/><rect x="167" y="10" width="1" height="5" fill="#111"/><rect x="178" y="12" width="1" height="3" fill="#111"/><rect x="190" y="0" width="1" height="15" fill="#111"/><rect x="202" y="12" width="1" height="3" fill="#111"/><rect x="213" y="10" width="1" height="5" fill="#111"/><rect x="225" y="12" width="1" height="3" fill="#111"/><rect x="236" y="0" width="1" height="15" fill="#111"/><rect x="248" y="12" width="1" height="3" fill="#111"/><rect x="260" y="10" width="1" height="5" fill="#111"/><rect x="271" y="12" width="1" height="3" fill="#111"/><rect x="283" y="0" width="1" height="15" fill="#111"/><rect x="295" y="12" width="1" height="3" fill="#111"/><rect x="306" y="10" width="1" height="5" fill="#111"/><rect x="318" y="12" width="1" height="3" fill="#111"/><rect x="330" y="0" width="1" height="15" fill="#111"/><rect x="341" y="12" width="1" height="3" fill="#111"/><rect x="353" y="10" width="1" height="5" fill="#111"/><rect x="365" y="12" width="1" height="3" fill="#111"/><rect x="376" y="0" width="1" height="15" fill="#111"/><rect x="388" y="12" width="1" height="3" fill="#111"/><rect x="399" y="10" width="1" height="5" fill="#111"/><rect x="411" y="12" width="1" height="3" fill="#111"/><rect x="423" y="0" width="1" height="15" fill="#111"/><rect x="434" y="12" width="1" height="3" fill="#111"/><rect x="446" y="10" width="1" height="5" fill="#111"/><rect x="458" y="12" width="1" height="3" fill="#111"/><rect x="469" y="0" width="1" height="15" fill="#111"/><rect x="481" y="12" width="1" height="3" fill="#111"/><rect x="493" y="10" width="1" height="5" fill="#111"/><rect x="504" y="12" width="1" height="3" fill="#111"/><rect x="516" y="0" width="1" height="15" fill="#111"/><rect x="527" y="12" width="1" height="3" fill="#111"/><rect x="539" y="10" width="1" height="5" fill="#111"/><rect x="551" y="12" width="1" height="3" fill="#111"/><rect x="562" y="0" width="1" height="15" fill="#111"/><rect x="574" y="12" width="1" height="3" fill="#111"/><rect x="586" y="10" width="1" height="5" fill="#111"/><rect x="597" y="12" width="1" height="3" fill="#111"/><rect x="609" y="0" width="1" height="15" fill="#111"/><rect x="621" y="12" width="1" height="3" fill="#111"/><rect x="632" y="10" width="1" height="5" fill="#111"/><rect x="644" y="12" width="1" height="3" fill="#111"/><rect x="655" y="0" width="1" height="15" fill="#111"/><rect x="667" y="12" width="1" height="3" fill="#111"/><rect x="679" y="10" width="1" height="5" fill="#111"/><rect x="690" y="12" width="1" height="3" fill="#111"/><rect x="702" y="0" width="1" height="15" fill="#111"/><rect x="714" y="12" width="1" height="3" fill="#111"/><rect x="725" y="10" width="1" height="5" fill="#111"/><rect x="737" y="12" width="1" height="3" fill="#111"/><rect x="749" y="0" width="1" height="15" fill="#111"/><rect x="760" y="12" width="1" height="3" fill="#111"/><rect x="772" y="10" width="1" height="5" fill="#111"/><rect x="784" y="12" width="1" height="3" fill="#111"/><rect x="795" y="0" width="1" height="15" fill="#111"/><rect x="807" y="12" width="1" height="3" fill="#111"/><rect x="818" y="10" width="1" height="5" fill="#111"/><rect x="830" y="12" width="1" height="3" fill="#111"/></svg>
<div class="t" style="left:62.70px;top:88.55px;font-size:10px;font-weight:normal;color:#111;transform:scaleX(0.8541);transform-origin:0 0;">2240</div>
<div class="t" style="left:109.26px;top:88.55px;font-size:10px;font-weight:normal;color:#111;transform:scaleX(0.8541);transform-origin:0 0;">2260</div>
<div class="t" style="left:155.81px;top:88.55px;font-size:10px;font-weight:normal;color:#111;transform:scaleX(0.8541);transform-origin:0 0;">2280</div>
<div class="t" style="left:202.37px;top:88.55px;font-size:10px;font-weight:normal;color:#111;transform:scaleX(0.8541);transform-origin:0 0;">2300</div>
<div class="t" style="left:248.92px;top:88.55px;font-size:10px;font-weight:normal;color:#111;transform:scaleX(0.8541);transform-origin:0 0;">2320</div>
<div class="t" style="left:295.48px;top:88.55px;font-size:10px;font-weight:normal;color:#111;transform:scaleX(0.8541);transform-origin:0 0;">2340</div>
<div class="t" style="left:342.04px;top:88.55px;font-size:10px;font-weight:normal;color:#111;transform:scaleX(0.8541);transform-origin:0 0;">2360</div>
<div class="t" style="left:388.59px;top:88.55px;font-size:10px;font-weight:normal;color:#111;transform:scaleX(0.8541);transform-origin:0 0;">2380</div>
<div class="t" style="left:435.15px;top:88.55px;font-size:10px;font-weight:normal;color:#111;transform:scaleX(0.8541);transform-origin:0 0;">2400</div>
<div class="t" style="left:481.70px;top:88.55px;font-size:10px;font-weight:normal;color:#111;transform:scaleX(0.8541);transform-origin:0 0;">2420</div>
<div class="t" style="left:528.26px;top:88.55px;font-size:10px;font-weight:normal;color:#111;transform:scaleX(0.8541);transform-origin:0 0;">2440</div>
<div class="t" style="left:574.82px;top:88.55px;font-size:10px;font-weight:normal;color:#111;transform:scaleX(0.8541);transform-origin:0 0;">2460</div>
<div class="t" style="left:621.37px;top:88.55px;font-size:10px;font-weight:normal;color:#111;transform:scaleX(0.8541);transform-origin:0 0;">2480</div>
<div class="t" style="left:667.93px;top:88.55px;font-size:10px;font-weight:normal;color:#111;transform:scaleX(0.8541);transform-origin:0 0;">2500</div>
<div class="t" style="left:714.48px;top:88.55px;font-size:10px;font-weight:normal;color:#111;transform:scaleX(0.8541);transform-origin:0 0;">2520</div>
<div class="t" style="left:761.04px;top:88.55px;font-size:10px;font-weight:normal;color:#111;transform:scaleX(0.8541);transform-origin:0 0;">2540</div>
<div class="t" style="left:807.60px;top:88.55px;font-size:10px;font-weight:normal;color:#111;transform:scaleX(0.8541);transform-origin:0 0;">2560</div>
<div class="t" style="left:854.15px;top:88.55px;font-size:10px;font-weight:normal;color:#111;transform:scaleX(0.8541);transform-origin:0 0;">2580</div>
<div class="a" style="left:42px;top:103px;width:856px;height:1px;background:#111"></div>
<svg class="a" style="left:42px;top:104px;" width="14" height="603" viewBox="0 0 14 603"><rect x="10" y="7" width="4" height="1" fill="#111"/><rect x="0" y="19" width="14" height="1" fill="#111"/><rect x="10" y="30" width="4" height="1" fill="#111"/><rect x="8" y="42" width="6" height="1" fill="#111"/><rect x="10" y="54" width="4" height="1" fill="#111"/><rect x="0" y="65" width="14" height="1" fill="#111"/><rect x="10" y="77" width="4" height="1" fill="#111"/><rect x="8" y="89" width="6" height="1" fill="#111"/><rect x="10" y="100" width="4" height="1" fill="#111"/><rect x="0" y="112" width="14" height="1" fill="#111"/><rect x="10" y="123" width="4" height="1" fill="#111"/><rect x="8" y="135" width="6" height="1" fill="#111"/><rect x="10" y="147" width="4" height="1" fill="#111"/><rect x="0" y="158" width="14" height="1" fill="#111"/><rect x="10" y="170" width="4" height="1" fill="#111"/><rect x="8" y="182" width="6" height="1" fill="#111"/><rect x="10" y="193" width="4" height="1" fill="#111"/><rect x="0" y="205" width="14" height="1" fill="#111"/><rect x="10" y="217" width="4" height="1" fill="#111"/><rect x="8" y="228" width="6" height="1" fill="#111"/><rect x="10" y="240" width="4" height="1" fill="#111"/><rect x="0" y="251" width="14" height="1" fill="#111"/><rect x="10" y="263" width="4" height="1" fill="#111"/><rect x="8" y="275" width="6" height="1" fill="#111"/><rect x="10" y="286" width="4" height="1" fill="#111"/><rect x="0" y="298" width="14" height="1" fill="#111"/><rect x="10" y="310" width="4" height="1" fill="#111"/><rect x="8" y="321" width="6" height="1" fill="#111"/><rect x="10" y="333" width="4" height="1" fill="#111"/><rect x="0" y="345" width="14" height="1" fill="#111"/><rect x="10" y="356" width="4" height="1" fill="#111"/><rect x="8" y="368" width="6" height="1" fill="#111"/><rect x="10" y="380" width="4" height="1" fill="#111"/><rect x="0" y="391" width="14" height="1" fill="#111"/><rect x="10" y="403" width="4" height="1" fill="#111"/><rect x="8" y="414" width="6" height="1" fill="#111"/><rect x="10" y="426" width="4" height="1" fill="#111"/><rect x="0" y="438" width="14" height="1" fill="#111"/><rect x="10" y="449" width="4" height="1" fill="#111"/><rect x="8" y="461" width="6" height="1" fill="#111"/><rect x="10" y="473" width="4" height="1" fill="#111"/><rect x="0" y="484" width="14" height="1" fill="#111"/><rect x="10" y="496" width="4" height="1" fill="#111"/><rect x="8" y="508" width="6" height="1" fill="#111"/><rect x="10" y="519" width="4" height="1" fill="#111"/><rect x="0" y="531" width="14" height="1" fill="#111"/><rect x="10" y="542" width="4" height="1" fill="#111"/><rect x="8" y="554" width="6" height="1" fill="#111"/><rect x="10" y="566" width="4" height="1" fill="#111"/><rect x="0" y="577" width="14" height="1" fill="#111"/><rect x="10" y="589" width="4" height="1" fill="#111"/><rect x="8" y="601" width="6" height="1" fill="#111"/></svg>
<div class="t" style="left:43.50px;top:122.20px;font-size:9.5px;font-weight:normal;color:#111;transform:scaleX(1.0410);transform-origin:0 0;">2</div>
<div class="t" style="left:43.50px;top:130.05px;font-size:9.5px;font-weight:normal;color:#111;transform:scaleX(1.0410);transform-origin:0 0;">8</div>
<div class="t" style="left:43.50px;top:137.90px;font-size:9.5px;font-weight:normal;color:#111;transform:scaleX(1.0410);transform-origin:0 0;">0</div>
<div class="t" style="left:43.50px;top:168.76px;font-size:9.5px;font-weight:normal;color:#111;transform:scaleX(1.0410);transform-origin:0 0;">3</div>
<div class="t" style="left:43.50px;top:176.61px;font-size:9.5px;font-weight:normal;color:#111;transform:scaleX(1.0410);transform-origin:0 0;">0</div>
<div class="t" style="left:43.50px;top:184.46px;font-size:9.5px;font-weight:normal;color:#111;transform:scaleX(1.0410);transform-origin:0 0;">0</div>
<div class="t" style="left:43.50px;top:215.31px;font-size:9.5px;font-weight:normal;color:#111;transform:scaleX(1.0410);transform-origin:0 0;">3</div>
<div class="t" style="left:43.50px;top:223.16px;font-size:9.5px;font-weight:normal;color:#111;transform:scaleX(1.0410);transform-origin:0 0;">2</div>
<div class="t" style="left:43.50px;top:231.01px;font-size:9.5px;font-weight:normal;color:#111;transform:scaleX(1.0410);transform-origin:0 0;">0</div>
<div class="t" style="left:43.50px;top:261.87px;font-size:9.5px;font-weight:normal;color:#111;transform:scaleX(1.0410);transform-origin:0 0;">3</div>
<div class="t" style="left:43.50px;top:269.72px;font-size:9.5px;font-weight:normal;color:#111;transform:scaleX(1.0410);transform-origin:0 0;">4</div>
<div class="t" style="left:43.50px;top:277.57px;font-size:9.5px;font-weight:normal;color:#111;transform:scaleX(1.0410);transform-origin:0 0;">0</div>
<div class="t" style="left:43.50px;top:308.43px;font-size:9.5px;font-weight:normal;color:#111;transform:scaleX(1.0410);transform-origin:0 0;">3</div>
<div class="t" style="left:43.50px;top:316.28px;font-size:9.5px;font-weight:normal;color:#111;transform:scaleX(1.0410);transform-origin:0 0;">6</div>
<div class="t" style="left:43.50px;top:324.13px;font-size:9.5px;font-weight:normal;color:#111;transform:scaleX(1.0410);transform-origin:0 0;">0</div>
<div class="t" style="left:43.50px;top:354.98px;font-size:9.5px;font-weight:normal;color:#111;transform:scaleX(1.0410);transform-origin:0 0;">3</div>
<div class="t" style="left:43.50px;top:362.83px;font-size:9.5px;font-weight:normal;color:#111;transform:scaleX(1.0410);transform-origin:0 0;">8</div>
<div class="t" style="left:43.50px;top:370.68px;font-size:9.5px;font-weight:normal;color:#111;transform:scaleX(1.0410);transform-origin:0 0;">0</div>
<div class="t" style="left:43.50px;top:401.54px;font-size:9.5px;font-weight:normal;color:#111;transform:scaleX(1.0410);transform-origin:0 0;">4</div>
<div class="t" style="left:43.50px;top:409.39px;font-size:9.5px;font-weight:normal;color:#111;transform:scaleX(1.0410);transform-origin:0 0;">0</div>
<div class="t" style="left:43.50px;top:417.24px;font-size:9.5px;font-weight:normal;color:#111;transform:scaleX(1.0410);transform-origin:0 0;">0</div>
<div class="t" style="left:43.50px;top:448.09px;font-size:9.5px;font-weight:normal;color:#111;transform:scaleX(1.0410);transform-origin:0 0;">4</div>
<div class="t" style="left:43.50px;top:455.94px;font-size:9.5px;font-weight:normal;color:#111;transform:scaleX(1.0410);transform-origin:0 0;">2</div>
<div class="t" style="left:43.50px;top:463.79px;font-size:9.5px;font-weight:normal;color:#111;transform:scaleX(1.0410);transform-origin:0 0;">0</div>
<div class="t" style="left:43.50px;top:494.65px;font-size:9.5px;font-weight:normal;color:#111;transform:scaleX(1.0410);transform-origin:0 0;">4</div>
<div class="t" style="left:43.50px;top:502.50px;font-size:9.5px;font-weight:normal;color:#111;transform:scaleX(1.0410);transform-origin:0 0;">4</div>
<div class="t" style="left:43.50px;top:510.35px;font-size:9.5px;font-weight:normal;color:#111;transform:scaleX(1.0410);transform-origin:0 0;">0</div>
<div class="t" style="left:43.50px;top:541.21px;font-size:9.5px;font-weight:normal;color:#111;transform:scaleX(1.0410);transform-origin:0 0;">4</div>
<div class="t" style="left:43.50px;top:549.06px;font-size:9.5px;font-weight:normal;color:#111;transform:scaleX(1.0410);transform-origin:0 0;">6</div>
<div class="t" style="left:43.50px;top:556.91px;font-size:9.5px;font-weight:normal;color:#111;transform:scaleX(1.0410);transform-origin:0 0;">0</div>
<div class="t" style="left:43.50px;top:587.76px;font-size:9.5px;font-weight:normal;color:#111;transform:scaleX(1.0410);transform-origin:0 0;">4</div>
<div class="t" style="left:43.50px;top:595.61px;font-size:9.5px;font-weight:normal;color:#111;transform:scaleX(1.0410);transform-origin:0 0;">8</div>
<div class="t" style="left:43.50px;top:603.46px;font-size:9.5px;font-weight:normal;color:#111;transform:scaleX(1.0410);transform-origin:0 0;">0</div>
<div class="t" style="left:43.50px;top:634.32px;font-size:9.5px;font-weight:normal;color:#111;transform:scaleX(1.0410);transform-origin:0 0;">5</div>
<div class="t" style="left:43.50px;top:642.17px;font-size:9.5px;font-weight:normal;color:#111;transform:scaleX(1.0410);transform-origin:0 0;">0</div>
<div class="t" style="left:43.50px;top:650.02px;font-size:9.5px;font-weight:normal;color:#111;transform:scaleX(1.0410);transform-origin:0 0;">0</div>
<div class="t" style="left:43.50px;top:680.87px;font-size:9.5px;font-weight:normal;color:#111;transform:scaleX(1.0410);transform-origin:0 0;">5</div>
<div class="t" style="left:43.50px;top:688.72px;font-size:9.5px;font-weight:normal;color:#111;transform:scaleX(1.0410);transform-origin:0 0;">2</div>
<div class="t" style="left:43.50px;top:696.57px;font-size:9.5px;font-weight:normal;color:#111;transform:scaleX(1.0410);transform-origin:0 0;">0</div>
<div class="a" style="left:55px;top:104px;width:1px;height:603px;background:#111"></div>
<div class="a" style="left:56px;top:104px;width:842px;height:603px;background:#111111;overflow:hidden"><svg width="842" height="603" style="position:absolute;left:0;top:0"><defs><filter id="nz" x="0" y="0" width="100%" height="100%"><feTurbulence type="fractalNoise" baseFrequency="0.45" numOctaves="3" seed="7"/><feColorMatrix type="matrix" values="0 0 0 0 0.18  0 0 0 0 0.18  0 0 0 0 0.18  0 0 0 2.2 -1.1"/></filter></defs><rect width="842" height="603" filter="url(#nz)" opacity="0.15"/><g fill="#070707"><rect x="52" y="0" width="5" height="603"/><rect x="250" y="0" width="5" height="603"/><rect x="449" y="0" width="4" height="603"/><rect x="647" y="0" width="3" height="603"/></g><path d="M748.0,0.0 762.0,20.0 773.0,47.0 782.0,74.0 787.0,101.0 790.0,129.0 791.0,157.0 791.0,184.0 790.0,211.0 787.0,241.0 783.5,268.0 780.0,296.0 777.0,324.0 771.5,351.0 767.0,378.5 762.0,405.5 757.0,433.5 752.6,459.0 747.4,485.0 741.4,515.0 736.0,542.0 729.8,568.8 724.0,596.7 722.0,604.0" fill="none" stroke="#111111" stroke-width="4"/><path d="M745.0,0.0 759.0,20.0 770.0,47.0 779.0,74.0 784.0,101.0 787.0,129.0 788.0,157.0 788.0,184.0 787.0,211.0 784.0,241.0 780.5,268.0 777.0,296.0 774.0,324.0 768.5,351.0 764.0,378.5 759.0,405.5 754.0,433.5 749.6,459.0 744.4,485.0 738.4,515.0 733.0,542.0 726.8,568.8 721.0,596.7 719.0,604.0" fill="none" stroke="#1d1d1d" stroke-width="2"/><path d="M756.0,0.0 770.0,20.0 781.0,47.0 790.0,74.0 795.0,101.0 798.0,129.0 799.0,157.0 799.0,184.0 798.0,211.0 795.0,241.0 791.5,268.0 788.0,296.0 785.0,324.0 779.5,351.0 775.0,378.5 770.0,405.5 765.0,433.5 760.6,459.0 755.4,485.0 749.4,515.0 744.0,542.0 737.8,568.8 732.0,596.7 730.0,604.0 L774.0,604.0 801.0,496.0 816.0,386.0 830.0,276.0 834.0,176.0 826.0,96.0 819.0,0.0 Z" fill="#191919"/><path d="M774.0,604.0 801.0,496.0 816.0,386.0 830.0,276.0 834.0,176.0 826.0,96.0 819.0,0.0" fill="none" stroke="#121212" stroke-width="3"/><path d="M758.0,0.0 772.0,20.0 783.0,47.0 792.0,74.0 797.0,101.0 800.0,129.0 801.0,157.0 801.0,184.0 800.0,211.0 797.0,241.0 793.5,268.0 790.0,296.0 787.0,324.0 781.5,351.0 777.0,378.5 772.0,405.5 767.0,433.5 762.6,459.0 757.4,485.0 751.4,515.0 746.0,542.0 739.8,568.8 734.0,596.7 732.0,604.0" fill="none" stroke="#0b0b0b" stroke-width="1.6"/><path d="M756.0,0.0 770.0,20.0 781.0,47.0 790.0,74.0 795.0,101.0 798.0,129.0 799.0,157.0 799.0,184.0 798.0,211.0 795.0,241.0 791.5,268.0 788.0,296.0 785.0,324.0 779.5,351.0 775.0,378.5 770.0,405.5 765.0,433.5 760.6,459.0 755.4,485.0 749.4,515.0 744.0,542.0 737.8,568.8 732.0,596.7 730.0,604.0" fill="none" stroke="#6e6e6e" stroke-width="3" stroke-dasharray="5 22"/><rect x="832" y="0" width="10" height="603" fill="#101010" opacity="0.6"/></svg></div>
<div class="a" style="left:898px;top:89px;width:14px;height:618px;background:#eeeeee"></div>
<svg class="a" style="left:901px;top:95px;" width="9" height="5" viewBox="0 0 9 5"><path d="M0.5 4.5L4.5 0.5L8.5 4.5" fill="none" stroke="#222" stroke-width="1.4"/></svg>
<div class="a" style="left:899px;top:170px;width:12px;height:33px;background:#cdcdcd"></div>
<svg class="a" style="left:901px;top:697px;" width="9" height="5" viewBox="0 0 9 5"><path d="M0.5 0.5L4.5 4.5L8.5 0.5" fill="none" stroke="#222" stroke-width="1.4"/></svg>
<div class="a" style="left:41px;top:707px;width:872px;height:16px;background:#d4d4d4"></div>
<div class="a" style="left:41px;top:707px;width:872px;height:1px;background:#2a2a2a"></div>
<div class="a" style="left:42px;top:708px;width:47px;height:15px;background:#fff"></div>
<div class="t" style="left:47.00px;top:710.04px;font-size:11px;font-weight:normal;color:#111;transform:scaleX(0.8520);transform-origin:0 0;">232,78%</div>
<div class="a" style="left:89px;top:708px;width:22px;height:15px;background:#e0e0e0;border-left:1px solid #999;border-right:1px solid #999"></div>
<svg class="a" style="left:94px;top:709px;" width="12" height="12" viewBox="0 0 12 12"><circle cx="6" cy="6" r="5.3" fill="#eee" stroke="#333" stroke-width="1.2"/><path d="M3.5 3.5H8V9" fill="none" stroke="#333" stroke-width="1.2"/></svg>
<div class="t" style="left:157.00px;top:710.04px;font-size:11px;font-weight:normal;color:#111;transform:scaleX(0.9111);transform-origin:0 0;">Док: 96,0M/2,17Г</div>
<div class="a" style="left:282px;top:708px;width:15px;height:15px;background:#e6e6e6;border-left:1px solid #aaa"></div>
<svg class="a" style="left:287px;top:710px;" width="6" height="11" viewBox="0 0 6 11"><path d="M0 0L6 5.5L0 11Z" fill="#111"/></svg>
<div class="a" style="left:297px;top:708px;width:601px;height:15px;background:#f0f0f0;border-left:1px solid #999"></div>
<svg class="a" style="left:302px;top:711px;" width="6" height="9" viewBox="0 0 6 9"><path d="M5 0.5L1 4.5L5 8.5" fill="none" stroke="#222" stroke-width="1.4"/></svg>
<div class="a" style="left:620px;top:708px;width:42px;height:14px;background:#cdcdcd"></div>
<svg class="a" style="left:886px;top:711px;" width="6" height="9" viewBox="0 0 6 9"><path d="M1 0.5L5 4.5L1 8.5" fill="none" stroke="#222" stroke-width="1.4"/></svg>
<div class="a" style="left:898px;top:708px;width:14px;height:15px;background:#d6d6d6"></div>
<div class="a" style="left:41px;top:723px;width:872px;height:1px;background:#1a1a1a"></div>
<div class="a" style="left:913px;top:69px;width:449px;height:655px;background:#1c1c1c"></div>
<div class="a" style="left:914px;top:69px;width:447px;height:654px;background:#d6d6d6"></div>
<div class="a" style="left:914px;top:69px;width:447px;height:12px;background:linear-gradient(#5c5c5c,#404040)"></div>
<svg class="a" style="left:1350px;top:73px;" width="11" height="6" viewBox="0 0 11 6"><path d="M0 0L4 3L0 6Z M5 0L9 3L5 6Z" fill="#f0f0f0"/></svg>
<div class="a" style="left:914px;top:81px;width:447px;height:17px;background:linear-gradient(#a0a0a0,#8e8e8e)"></div>
<div class="a" style="left:914px;top:81px;width:447px;height:1px;background:#222"></div>
<div class="a" style="left:914px;top:82px;width:89px;height:16px;background:linear-gradient(#aaaaaa,#979797)"></div>
<div class="a" style="left:1003px;top:82px;width:1px;height:16px;background:#555"></div>
<div class="t" style="left:921.00px;top:83.55px;font-size:11px;font-weight:normal;color:#222;transform:scaleX(0.9716);transform-origin:0 0;-webkit-text-stroke:0.5px currentColor;">Наборы кистей</div>
<div class="a" style="left:1003px;top:82px;width:44px;height:17px;background:linear-gradient(#e4e4e4,#d6d6d6)"></div>
<div class="a" style="left:1047px;top:82px;width:1px;height:16px;background:#555"></div>
<div class="t" style="left:1010.00px;top:83.55px;font-size:11px;font-weight:normal;color:#222;transform:scaleX(0.9889);transform-origin:0 0;-webkit-text-stroke:0.5px currentColor;">Кисть</div>
<div class="a" style="left:1047px;top:82px;width:100px;height:16px;background:linear-gradient(#aaaaaa,#979797)"></div>
<div class="a" style="left:1147px;top:82px;width:1px;height:16px;background:#555"></div>
<div class="t" style="left:1054.00px;top:83.55px;font-size:11px;font-weight:normal;color:#222;-webkit-text-stroke:0.5px currentColor;">Источник клонов</div>
<svg class="a" style="left:1343px;top:87px;" width="15" height="9" viewBox="0 0 15 9"><path d="M0 3H5L2.5 6Z" fill="#222"/><rect x="6" y="0.5" width="8" height="1.2" fill="#222"/><rect x="6" y="2.8" width="8" height="1.2" fill="#222"/><rect x="6" y="5.1" width="8" height="1.2" fill="#222"/><rect x="6" y="7.4" width="8" height="1.2" fill="#222"/></svg>
<div class="a" style="left:914px;top:98px;width:89px;height:1px;background:#3a3a3a"></div>
<div class="a" style="left:1047px;top:98px;width:314px;height:1px;background:#3a3a3a"></div>
<div class="a" style="left:934px;top:104px;width:119px;height:21px;border:1px solid #a4a4a4;background:linear-gradient(#ececec,#dcdcdc)"></div>
<div class="t" style="left:957.25px;top:107.55px;font-size:11px;font-weight:normal;color:#111;transform:scaleX(0.9392);transform-origin:0 0;">Наборы кистей</div>
<div class="a" style="left:922px;top:133px;width:144px;height:294px;border:1px solid #222;border-top-width:2px;background:#d6d6d6"></div>
<div class="a" style="left:941px;top:137px;width:122px;height:14px;background:#1a6ad0"></div>
<div class="t" style="left:941.50px;top:138.04px;font-size:11px;font-weight:bold;color:#fff;transform:scaleX(0.9507);transform-origin:0 0;">Форма отпечатка кисти</div>
<div class="a" style="left:923px;top:154px;width:142px;height:1px;background:#f4f4f4"></div>
<div class="a" style="left:923px;top:153px;width:142px;height:1px;background:#c4c4c4"></div>
<div class="a" style="left:929px;top:159px;width:11px;height:11px;border:1px solid #222;background:#f8f8f8"></div>
<svg class="a" style="left:930px;top:160px;" width="9" height="9" viewBox="0 0 9 9"><path d="M1.5 4.5L3.5 7L8 1.5" fill="none" stroke="#111" stroke-width="1.3"/></svg>
<div class="t" style="left:943.00px;top:157.54px;font-size:11px;font-weight:normal;color:#111;transform:scaleX(0.9174);transform-origin:0 0;">Динамика формы</div>
<svg class="a" style="left:1051px;top:159px;" width="12" height="12" viewBox="0 0 12 12"><path d="M2.5 6V4A3 3 0 0 1 8.5 4" fill="none" stroke="#333" stroke-width="1.3"/><rect x="0.5" y="6" width="9" height="6" fill="#555" stroke="#333"/><rect x="1.5" y="8" width="7" height="1" fill="#999"/><rect x="1.5" y="10" width="7" height="1" fill="#999"/><path d="M10 1L11 0M10.5 3H12" stroke="#333" stroke-width="0.8"/></svg>
<div class="a" style="left:923px;top:174px;width:142px;height:1px;background:#f4f4f4"></div>
<div class="a" style="left:923px;top:173px;width:142px;height:1px;background:#c4c4c4"></div>
<div class="a" style="left:929px;top:179px;width:11px;height:11px;border:1px solid #222;background:#f8f8f8"></div>
<div class="t" style="left:943.00px;top:177.54px;font-size:11px;font-weight:normal;color:#111;transform:scaleX(1.0071);transform-origin:0 0;">Рассеивание</div>
<svg class="a" style="left:1051px;top:179px;" width="12" height="12" viewBox="0 0 12 12"><path d="M2.5 6V4A3 3 0 0 1 8.5 4" fill="none" stroke="#333" stroke-width="1.3"/><rect x="0.5" y="6" width="9" height="6" fill="#555" stroke="#333"/><rect x="1.5" y="8" width="7" height="1" fill="#999"/><rect x="1.5" y="10" width="7" height="1" fill="#999"/><path d="M10 1L11 0M10.5 3H12" stroke="#333" stroke-width="0.8"/></svg>
<div class="a" style="left:923px;top:194px;width:142px;height:1px;background:#f4f4f4"></div>
<div class="a" style="left:923px;top:193px;width:142px;height:1px;background:#c4c4c4"></div>
<div class="a" style="left:929px;top:199px;width:11px;height:11px;border:1px solid #222;background:#f8f8f8"></div>
<div class="t" style="left:943.00px;top:197.54px;font-size:11px;font-weight:normal;color:#111;transform:scaleX(0.9906);transform-origin:0 0;">Текстура</div>
<svg class="a" style="left:1051px;top:199px;" width="12" height="12" viewBox="0 0 12 12"><path d="M2.5 6V4A3 3 0 0 1 8.5 4" fill="none" stroke="#333" stroke-width="1.3"/><rect x="0.5" y="6" width="9" height="6" fill="#555" stroke="#333"/><rect x="1.5" y="8" width="7" height="1" fill="#999"/><rect x="1.5" y="10" width="7" height="1" fill="#999"/><path d="M10 1L11 0M10.5 3H12" stroke="#333" stroke-width="0.8"/></svg>
<div class="a" style="left:923px;top:214px;width:142px;height:1px;background:#f4f4f4"></div>
<div class="a" style="left:923px;top:213px;width:142px;height:1px;background:#c4c4c4"></div>
<div class="a" style="left:929px;top:219px;width:11px;height:11px;border:1px solid #222;background:#f8f8f8"></div>
<div class="t" style="left:943.00px;top:217.54px;font-size:11px;font-weight:normal;color:#111;transform:scaleX(0.9612);transform-origin:0 0;">Двойная кисть</div>
<svg class="a" style="left:1051px;top:219px;" width="12" height="12" viewBox="0 0 12 12"><path d="M2.5 6V4A3 3 0 0 1 8.5 4" fill="none" stroke="#333" stroke-width="1.3"/><rect x="0.5" y="6" width="9" height="6" fill="#555" stroke="#333"/><rect x="1.5" y="8" width="7" height="1" fill="#999"/><rect x="1.5" y="10" width="7" height="1" fill="#999"/><path d="M10 1L11 0M10.5 3H12" stroke="#333" stroke-width="0.8"/></svg>
<div class="a" style="left:923px;top:234px;width:142px;height:1px;background:#f4f4f4"></div>
<div class="a" style="left:923px;top:233px;width:142px;height:1px;background:#c4c4c4"></div>
<div class="a" style="left:929px;top:239px;width:11px;height:11px;border:1px solid #222;background:#f8f8f8"></div>
<div class="t" style="left:943.00px;top:237.54px;font-size:11px;font-weight:normal;color:#111;transform:scaleX(0.9330);transform-origin:0 0;">Динамика цвета</div>
<svg class="a" style="left:1051px;top:239px;" width="12" height="12" viewBox="0 0 12 12"><path d="M2.5 6V4A3 3 0 0 1 8.5 4" fill="none" stroke="#333" stroke-width="1.3"/><rect x="0.5" y="6" width="9" height="6" fill="#555" stroke="#333"/><rect x="1.5" y="8" width="7" height="1" fill="#999"/><rect x="1.5" y="10" width="7" height="1" fill="#999"/><path d="M10 1L11 0M10.5 3H12" stroke="#333" stroke-width="0.8"/></svg>
<div class="a" style="left:923px;top:254px;width:142px;height:1px;background:#f4f4f4"></div>
<div class="a" style="left:923px;top:253px;width:142px;height:1px;background:#c4c4c4"></div>
<div class="a" style="left:929px;top:259px;width:11px;height:11px;border:1px solid #222;background:#f8f8f8"></div>
<div class="t" style="left:943.00px;top:257.55px;font-size:11px;font-weight:normal;color:#111;transform:scaleX(0.8772);transform-origin:0 0;">Передача</div>
<svg class="a" style="left:1051px;top:259px;" width="12" height="12" viewBox="0 0 12 12"><path d="M2.5 6V4A3 3 0 0 1 8.5 4" fill="none" stroke="#333" stroke-width="1.3"/><rect x="0.5" y="6" width="9" height="6" fill="#555" stroke="#333"/><rect x="1.5" y="8" width="7" height="1" fill="#999"/><rect x="1.5" y="10" width="7" height="1" fill="#999"/><path d="M10 1L11 0M10.5 3H12" stroke="#333" stroke-width="0.8"/></svg>
<div class="a" style="left:923px;top:275px;width:142px;height:2px;background:#9a9a9a"></div>
<div class="a" style="left:929px;top:281px;width:11px;height:11px;border:1px solid #222;background:#f8f8f8"></div>
<div class="t" style="left:943.00px;top:280.55px;font-size:11px;font-weight:normal;color:#111;">Шум</div>
<svg class="a" style="left:1051px;top:281px;" width="12" height="12" viewBox="0 0 12 12"><path d="M2.5 6V4A3 3 0 0 1 8.5 4" fill="none" stroke="#333" stroke-width="1.3"/><rect x="0.5" y="6" width="9" height="6" fill="#555" stroke="#333"/><rect x="1.5" y="8" width="7" height="1" fill="#999"/><rect x="1.5" y="10" width="7" height="1" fill="#999"/><path d="M10 1L11 0M10.5 3H12" stroke="#333" stroke-width="0.8"/></svg>
<div class="a" style="left:929px;top:301px;width:11px;height:11px;border:1px solid #222;background:#f8f8f8"></div>
<div class="t" style="left:943.00px;top:300.55px;font-size:11px;font-weight:normal;color:#111;transform:scaleX(0.9265);transform-origin:0 0;">Влажные края</div>
<svg class="a" style="left:1051px;top:301px;" width="12" height="12" viewBox="0 0 12 12"><path d="M2.5 6V4A3 3 0 0 1 8.5 4" fill="none" stroke="#333" stroke-width="1.3"/><rect x="0.5" y="6" width="9" height="6" fill="#555" stroke="#333"/><rect x="1.5" y="8" width="7" height="1" fill="#999"/><rect x="1.5" y="10" width="7" height="1" fill="#999"/><path d="M10 1L11 0M10.5 3H12" stroke="#333" stroke-width="0.8"/></svg>
<div class="a" style="left:929px;top:321px;width:11px;height:11px;border:1px solid #222;background:#f8f8f8"></div>
<div class="t" style="left:943.00px;top:320.55px;font-size:11px;font-weight:normal;color:#111;transform:scaleX(0.9266);transform-origin:0 0;">Аэрограф</div>
<svg class="a" style="left:1051px;top:321px;" width="12" height="12" viewBox="0 0 12 12"><path d="M2.5 6V4A3 3 0 0 1 8.5 4" fill="none" stroke="#333" stroke-width="1.3"/><rect x="0.5" y="6" width="9" height="6" fill="#555" stroke="#333"/><rect x="1.5" y="8" width="7" height="1" fill="#999"/><rect x="1.5" y="10" width="7" height="1" fill="#999"/><path d="M10 1L11 0M10.5 3H12" stroke="#333" stroke-width="0.8"/></svg>
<div class="a" style="left:929px;top:341px;width:11px;height:11px;border:1px solid #222;background:#f8f8f8"></div>
<svg class="a" style="left:930px;top:342px;" width="9" height="9" viewBox="0 0 9 9"><path d="M1.5 4.5L3.5 7L8 1.5" fill="none" stroke="#111" stroke-width="1.3"/></svg>
<div class="t" style="left:943.00px;top:340.55px;font-size:11px;font-weight:normal;color:#111;transform:scaleX(0.9569);transform-origin:0 0;">Сглаживание</div>
<svg class="a" style="left:1051px;top:341px;" width="12" height="12" viewBox="0 0 12 12"><path d="M2.5 6V4A3 3 0 0 1 8.5 4" fill="none" stroke="#333" stroke-width="1.3"/><rect x="0.5" y="6" width="9" height="6" fill="#555" stroke="#333"/><rect x="1.5" y="8" width="7" height="1" fill="#999"/><rect x="1.5" y="10" width="7" height="1" fill="#999"/><path d="M10 1L11 0M10.5 3H12" stroke="#333" stroke-width="0.8"/></svg>
<div class="a" style="left:929px;top:361px;width:11px;height:11px;border:1px solid #222;background:#f8f8f8"></div>
<div class="t" style="left:943.00px;top:360.55px;font-size:11px;font-weight:normal;color:#111;transform:scaleX(0.9764);transform-origin:0 0;">Защита текстуры</div>
<svg class="a" style="left:1051px;top:361px;" width="12" height="12" viewBox="0 0 12 12"><path d="M2.5 6V4A3 3 0 0 1 8.5 4" fill="none" stroke="#333" stroke-width="1.3"/><rect x="0.5" y="6" width="9" height="6" fill="#555" stroke="#333"/><rect x="1.5" y="8" width="7" height="1" fill="#999"/><rect x="1.5" y="10" width="7" height="1" fill="#999"/><path d="M10 1L11 0M10.5 3H12" stroke="#333" stroke-width="0.8"/></svg>
<div class="a" style="left:1076px;top:105px;width:275px;height:102px;border:1px solid #444;background:#fff"></div>
<svg class="a" style="left:1076px;top:105px;" width="275" height="102" viewBox="0 0 275 102"><rect x="1.2" y="0" width="1" height="101" fill="#222"/><rect x="33.4" y="0" width="1" height="101" fill="#222"/><rect x="65.5" y="0" width="1" height="101" fill="#222"/><rect x="97.6" y="0" width="1" height="101" fill="#222"/><rect x="129.6" y="0" width="1" height="101" fill="#222"/><rect x="161.5" y="0" width="1" height="101" fill="#222"/><rect x="193.6" y="0" width="1" height="101" fill="#222"/><rect x="225.4" y="0" width="1" height="101" fill="#222"/><rect x="257.7" y="0" width="1" height="101" fill="#222"/><rect x="0" y="6.0" width="257.7" height="1" fill="#222"/><rect x="0" y="38.5" width="257.7" height="1" fill="#222"/><rect x="0" y="70.4" width="257.7" height="1" fill="#222"/><rect x="0" y="70.4" width="193.6" height="1" fill="#222"/><rect x="194.6" y="71.4" width="63.1" height="30" fill="#fff"/><rect x="11.3" y="1" width="12" height="2" fill="#555"/><rect x="43.5" y="1" width="12" height="2" fill="#555"/><rect x="75.5" y="1" width="12" height="2" fill="#555"/><rect x="107.6" y="1" width="12" height="2" fill="#555"/><rect x="139.5" y="1" width="12" height="2" fill="#555"/><rect x="171.5" y="1" width="12" height="2" fill="#555"/><rect x="203.5" y="1" width="12" height="2" fill="#555"/><rect x="235.6" y="1" width="12" height="2" fill="#555"/><rect x="66.0" y="6.5" width="32.0" height="32.5" fill="none" stroke="#111" stroke-width="2"/><defs><radialGradient id="sg"><stop offset="0" stop-color="#000"/><stop offset="0.35" stop-color="#111"/><stop offset="0.7" stop-color="#777" stop-opacity="0.6"/><stop offset="1" stop-color="#fff" stop-opacity="0"/></radialGradient></defs><path d="M11.3 9.4C15.3 8.4 19.3 8.4 22.3 10.4M15.3 10.4C11.3 18.4 11.3 23.4 18.3 22.4C24.3 21.4 22.3 14.4 15.3 10.4" fill="none" stroke="#111" stroke-width="1.4"/><circle cx="49.5" cy="16.4" r="7.5" fill="#000"/><rect x="44.4" y="11.4" width="1.3" height="1.3" fill="#111"/><rect x="51.7" y="8.5" width="1.3" height="1.3" fill="#111"/><rect x="48.9" y="8.3" width="1.3" height="1.3" fill="#111"/><rect x="54.7" y="17.4" width="1.3" height="1.3" fill="#111"/><rect x="55.6" y="14.1" width="1.3" height="1.3" fill="#111"/><rect x="51.3" y="15.1" width="1.3" height="1.3" fill="#111"/><rect x="45.8" y="17.1" width="1.3" height="1.3" fill="#111"/><rect x="43.6" y="14.7" width="1.3" height="1.3" fill="#111"/><rect x="52.8" y="16.7" width="1.3" height="1.3" fill="#111"/><rect x="48.0" y="24.3" width="1.3" height="1.3" fill="#111"/><rect x="49.7" y="13.6" width="1.3" height="1.3" fill="#111"/><rect x="50.2" y="13.9" width="1.3" height="1.3" fill="#111"/><rect x="47.6" y="14.7" width="1.3" height="1.3" fill="#111"/><rect x="57.3" y="16.5" width="1.3" height="1.3" fill="#111"/><rect x="50.3" y="19.7" width="1.3" height="1.3" fill="#111"/><rect x="57.2" y="15.5" width="1.3" height="1.3" fill="#111"/><rect x="47.4" y="24.5" width="1.3" height="1.3" fill="#111"/><rect x="42.9" y="14.8" width="1.3" height="1.3" fill="#111"/><rect x="51.7" y="24.3" width="1.3" height="1.3" fill="#111"/><rect x="46.4" y="8.6" width="1.3" height="1.3" fill="#111"/><rect x="52.7" y="13.9" width="1.3" height="1.3" fill="#111"/><rect x="47.6" y="18.6" width="1.3" height="1.3" fill="#111"/><rect x="50.5" y="17.7" width="1.3" height="1.3" fill="#111"/><rect x="47.5" y="22.4" width="1.3" height="1.3" fill="#111"/><rect x="56.2" y="16.5" width="1.3" height="1.3" fill="#111"/><rect x="47.2" y="20.0" width="1.3" height="1.3" fill="#111"/><rect x="51.7" y="11.4" width="1.3" height="1.3" fill="#111"/><rect x="47.2" y="21.4" width="1.3" height="1.3" fill="#111"/><rect x="49.0" y="14.9" width="1.3" height="1.3" fill="#111"/><rect x="50.3" y="16.3" width="1.3" height="1.3" fill="#111"/><circle cx="81.5" cy="16.4" r="7.5" fill="#000"/><rect x="81.5" y="8.7" width="1.3" height="1.3" fill="#111"/><rect x="88.9" y="17.2" width="1.3" height="1.3" fill="#111"/><rect x="77.5" y="21.0" width="1.3" height="1.3" fill="#111"/><rect x="82.9" y="16.5" width="1.3" height="1.3" fill="#111"/><rect x="85.0" y="23.9" width="1.3" height="1.3" fill="#111"/><rect x="83.9" y="23.2" width="1.3" height="1.3" fill="#111"/><rect x="89.0" y="12.9" width="1.3" height="1.3" fill="#111"/><rect x="79.0" y="20.2" width="1.3" height="1.3" fill="#111"/><rect x="74.3" y="15.3" width="1.3" height="1.3" fill="#111"/><rect x="87.1" y="20.9" width="1.3" height="1.3" fill="#111"/><rect x="83.8" y="9.0" width="1.3" height="1.3" fill="#111"/><rect x="89.6" y="18.3" width="1.3" height="1.3" fill="#111"/><rect x="85.3" y="18.8" width="1.3" height="1.3" fill="#111"/><rect x="75.4" y="11.2" width="1.3" height="1.3" fill="#111"/><rect x="77.2" y="23.2" width="1.3" height="1.3" fill="#111"/><rect x="77.5" y="15.2" width="1.3" height="1.3" fill="#111"/><rect x="80.3" y="19.2" width="1.3" height="1.3" fill="#111"/><rect x="83.9" y="17.7" width="1.3" height="1.3" fill="#111"/><rect x="78.4" y="8.5" width="1.3" height="1.3" fill="#111"/><rect x="82.3" y="17.6" width="1.3" height="1.3" fill="#111"/><rect x="87.4" y="15.9" width="1.3" height="1.3" fill="#111"/><rect x="78.6" y="18.4" width="1.3" height="1.3" fill="#111"/><rect x="75.3" y="12.2" width="1.3" height="1.3" fill="#111"/><rect x="76.7" y="17.8" width="1.3" height="1.3" fill="#111"/><rect x="89.1" y="19.2" width="1.3" height="1.3" fill="#111"/><rect x="87.0" y="17.5" width="1.3" height="1.3" fill="#111"/><rect x="82.9" y="14.3" width="1.3" height="1.3" fill="#111"/><rect x="80.6" y="8.2" width="1.3" height="1.3" fill="#111"/><rect x="76.5" y="11.0" width="1.3" height="1.3" fill="#111"/><rect x="85.6" y="19.6" width="1.3" height="1.3" fill="#111"/><rect x="117.9" y="22.2" width="1.1" height="1.1" fill="#111"/><rect x="112.2" y="21.2" width="1.1" height="1.1" fill="#111"/><rect x="120.9" y="16.4" width="1.1" height="1.1" fill="#111"/><rect x="118.5" y="15.7" width="1.1" height="1.1" fill="#111"/><rect x="107.0" y="16.9" width="1.1" height="1.1" fill="#111"/><rect x="109.8" y="16.9" width="1.1" height="1.1" fill="#111"/><rect x="111.5" y="17.8" width="1.1" height="1.1" fill="#111"/><rect x="107.9" y="21.9" width="1.1" height="1.1" fill="#111"/><rect x="119.5" y="14.9" width="1.1" height="1.1" fill="#111"/><rect x="109.4" y="16.4" width="1.1" height="1.1" fill="#111"/><rect x="116.7" y="18.3" width="1.1" height="1.1" fill="#111"/><rect x="115.1" y="9.2" width="1.1" height="1.1" fill="#111"/><rect x="109.1" y="21.7" width="1.1" height="1.1" fill="#111"/><rect x="114.6" y="10.0" width="1.1" height="1.1" fill="#111"/><rect x="110.1" y="10.6" width="1.1" height="1.1" fill="#111"/><rect x="109.4" y="21.3" width="1.1" height="1.1" fill="#111"/><rect x="112.6" y="21.5" width="1.1" height="1.1" fill="#111"/><rect x="114.4" y="10.0" width="1.1" height="1.1" fill="#111"/><rect x="111.5" y="23.8" width="1.1" height="1.1" fill="#111"/><rect x="110.2" y="11.7" width="1.1" height="1.1" fill="#111"/><rect x="119.2" y="16.8" width="1.1" height="1.1" fill="#111"/><rect x="113.6" y="22.7" width="1.1" height="1.1" fill="#111"/><rect x="106.7" y="18.0" width="1.1" height="1.1" fill="#111"/><rect x="109.4" y="10.8" width="1.1" height="1.1" fill="#111"/><rect x="110.1" y="21.4" width="1.1" height="1.1" fill="#111"/><rect x="113.1" y="9.3" width="1.1" height="1.1" fill="#111"/><rect x="109.4" y="22.2" width="1.1" height="1.1" fill="#111"/><rect x="118.0" y="11.7" width="1.1" height="1.1" fill="#111"/><rect x="121.3" y="15.2" width="1.1" height="1.1" fill="#111"/><rect x="108.2" y="15.8" width="1.1" height="1.1" fill="#111"/><rect x="117.2" y="22.6" width="1.1" height="1.1" fill="#111"/><rect x="118.3" y="14.4" width="1.1" height="1.1" fill="#111"/><rect x="111.2" y="10.3" width="1.1" height="1.1" fill="#111"/><rect x="113.3" y="13.6" width="1.1" height="1.1" fill="#111"/><rect x="114.7" y="10.7" width="1.1" height="1.1" fill="#111"/><rect x="111.2" y="12.3" width="1.1" height="1.1" fill="#111"/><rect x="108.7" y="11.6" width="1.1" height="1.1" fill="#111"/><rect x="109.3" y="11.4" width="1.1" height="1.1" fill="#111"/><rect x="116.2" y="16.9" width="1.1" height="1.1" fill="#111"/><rect x="107.8" y="18.6" width="1.1" height="1.1" fill="#111"/><rect x="114.8" y="22.7" width="1.1" height="1.1" fill="#111"/><rect x="112.8" y="15.5" width="1.1" height="1.1" fill="#111"/><rect x="110.4" y="17.0" width="1.1" height="1.1" fill="#111"/><rect x="115.9" y="17.2" width="1.1" height="1.1" fill="#111"/><rect x="112.4" y="19.0" width="1.1" height="1.1" fill="#111"/><rect x="145.8" y="17.2" width="1.3" height="1.3" fill="#111"/><rect x="142.3" y="17.1" width="1.3" height="1.3" fill="#111"/><rect x="142.2" y="13.6" width="1.3" height="1.3" fill="#111"/><rect x="146.0" y="22.0" width="1.3" height="1.3" fill="#111"/><rect x="149.0" y="16.4" width="1.3" height="1.3" fill="#111"/><rect x="144.9" y="19.9" width="1.3" height="1.3" fill="#111"/><rect x="149.6" y="20.0" width="1.3" height="1.3" fill="#111"/><rect x="145.0" y="17.0" width="1.3" height="1.3" fill="#111"/><rect x="144.4" y="15.4" width="1.3" height="1.3" fill="#111"/><rect x="142.5" y="15.5" width="1.3" height="1.3" fill="#111"/><rect x="140.4" y="13.6" width="1.3" height="1.3" fill="#111"/><rect x="147.0" y="13.2" width="1.3" height="1.3" fill="#111"/><rect x="147.3" y="12.2" width="1.3" height="1.3" fill="#111"/><rect x="144.3" y="17.8" width="1.3" height="1.3" fill="#111"/><rect x="142.0" y="14.0" width="1.3" height="1.3" fill="#111"/><rect x="151.2" y="14.8" width="1.3" height="1.3" fill="#111"/><rect x="143.1" y="14.4" width="1.3" height="1.3" fill="#111"/><rect x="145.6" y="16.3" width="1.3" height="1.3" fill="#111"/><rect x="148.9" y="19.1" width="1.3" height="1.3" fill="#111"/><rect x="144.2" y="15.2" width="1.3" height="1.3" fill="#111"/><rect x="141.7" y="12.3" width="1.3" height="1.3" fill="#111"/><rect x="143.0" y="18.9" width="1.3" height="1.3" fill="#111"/><rect x="146.0" y="19.2" width="1.3" height="1.3" fill="#111"/><rect x="148.9" y="15.8" width="1.3" height="1.3" fill="#111"/><rect x="151.1" y="15.0" width="1.3" height="1.3" fill="#111"/><rect x="143.3" y="14.9" width="1.3" height="1.3" fill="#111"/><rect x="149.5" y="15.9" width="1.3" height="1.3" fill="#111"/><rect x="142.9" y="17.9" width="1.3" height="1.3" fill="#111"/><rect x="149.5" y="16.0" width="1.3" height="1.3" fill="#111"/><rect x="144.7" y="20.1" width="1.3" height="1.3" fill="#111"/><rect x="148.8" y="19.5" width="1.3" height="1.3" fill="#111"/><rect x="142.9" y="17.4" width="1.3" height="1.3" fill="#111"/><rect x="146.6" y="11.2" width="1.3" height="1.3" fill="#111"/><rect x="149.6" y="16.7" width="1.3" height="1.3" fill="#111"/><rect x="144.7" y="22.1" width="1.3" height="1.3" fill="#111"/><rect x="146.1" y="13.9" width="1.3" height="1.3" fill="#111"/><rect x="145.3" y="18.3" width="1.3" height="1.3" fill="#111"/><rect x="148.4" y="16.2" width="1.3" height="1.3" fill="#111"/><rect x="142.6" y="14.0" width="1.3" height="1.3" fill="#111"/><rect x="142.8" y="12.9" width="1.3" height="1.3" fill="#111"/><path d="M141.5 13.4L148.5 20.4" stroke="#111" stroke-width="3"/><circle cx="177.5" cy="16.4" r="7.5" fill="#777"/><rect x="177.5" y="14.2" width="1.2" height="1.2" fill="#111"/><rect x="177.8" y="12.5" width="1.2" height="1.2" fill="#111"/><rect x="173.5" y="15.5" width="1.2" height="1.2" fill="#111"/><rect x="176.0" y="21.6" width="1.2" height="1.2" fill="#111"/><rect x="173.3" y="17.4" width="1.2" height="1.2" fill="#111"/><rect x="177.4" y="10.6" width="1.2" height="1.2" fill="#111"/><rect x="181.0" y="17.2" width="1.2" height="1.2" fill="#111"/><rect x="170.3" y="18.5" width="1.2" height="1.2" fill="#111"/><rect x="181.8" y="12.8" width="1.2" height="1.2" fill="#111"/><rect x="184.4" y="17.0" width="1.2" height="1.2" fill="#111"/><rect x="172.4" y="18.9" width="1.2" height="1.2" fill="#111"/><rect x="176.0" y="10.5" width="1.2" height="1.2" fill="#111"/><rect x="170.0" y="17.3" width="1.2" height="1.2" fill="#111"/><rect x="174.1" y="19.4" width="1.2" height="1.2" fill="#111"/><rect x="179.3" y="14.0" width="1.2" height="1.2" fill="#111"/><rect x="175.5" y="23.3" width="1.2" height="1.2" fill="#111"/><rect x="184.1" y="19.3" width="1.2" height="1.2" fill="#111"/><rect x="175.9" y="11.8" width="1.2" height="1.2" fill="#111"/><rect x="176.0" y="23.1" width="1.2" height="1.2" fill="#111"/><rect x="179.7" y="15.1" width="1.2" height="1.2" fill="#111"/><rect x="172.0" y="17.2" width="1.2" height="1.2" fill="#111"/><rect x="173.4" y="16.5" width="1.2" height="1.2" fill="#111"/><rect x="180.9" y="21.2" width="1.2" height="1.2" fill="#111"/><rect x="178.2" y="14.9" width="1.2" height="1.2" fill="#111"/><rect x="178.4" y="23.4" width="1.2" height="1.2" fill="#111"/><rect x="179.2" y="10.4" width="1.2" height="1.2" fill="#111"/><rect x="184.0" y="17.5" width="1.2" height="1.2" fill="#111"/><rect x="185.5" y="15.3" width="1.2" height="1.2" fill="#111"/><rect x="177.2" y="15.2" width="1.2" height="1.2" fill="#111"/><rect x="179.3" y="13.7" width="1.2" height="1.2" fill="#111"/><rect x="172.8" y="10.2" width="1.2" height="1.2" fill="#111"/><rect x="177.0" y="14.1" width="1.2" height="1.2" fill="#111"/><rect x="175.5" y="23.7" width="1.2" height="1.2" fill="#111"/><rect x="181.1" y="21.2" width="1.2" height="1.2" fill="#111"/><rect x="175.3" y="17.8" width="1.2" height="1.2" fill="#111"/><rect x="176.7" y="15.6" width="1.2" height="1.2" fill="#111"/><rect x="181.0" y="19.2" width="1.2" height="1.2" fill="#111"/><rect x="178.8" y="17.0" width="1.2" height="1.2" fill="#111"/><rect x="171.6" y="13.4" width="1.2" height="1.2" fill="#111"/><rect x="179.3" y="14.7" width="1.2" height="1.2" fill="#111"/><rect x="173.9" y="18.1" width="1.2" height="1.2" fill="#111"/><rect x="173.3" y="13.3" width="1.2" height="1.2" fill="#111"/><rect x="181.7" y="14.7" width="1.2" height="1.2" fill="#111"/><rect x="183.6" y="18.6" width="1.2" height="1.2" fill="#111"/><rect x="181.1" y="21.3" width="1.2" height="1.2" fill="#111"/><rect x="170.0" y="16.1" width="1.2" height="1.2" fill="#111"/><rect x="171.9" y="14.4" width="1.2" height="1.2" fill="#111"/><rect x="177.1" y="22.0" width="1.2" height="1.2" fill="#111"/><rect x="177.4" y="23.1" width="1.2" height="1.2" fill="#111"/><rect x="175.2" y="16.1" width="1.2" height="1.2" fill="#111"/><rect x="178.0" y="20.8" width="1.2" height="1.2" fill="#111"/><rect x="177.3" y="13.6" width="1.2" height="1.2" fill="#111"/><rect x="176.1" y="10.4" width="1.2" height="1.2" fill="#111"/><rect x="183.0" y="19.6" width="1.2" height="1.2" fill="#111"/><rect x="179.5" y="17.6" width="1.2" height="1.2" fill="#111"/><rect x="174.7" y="14.5" width="1.2" height="1.2" fill="#111"/><rect x="181.2" y="12.8" width="1.2" height="1.2" fill="#111"/><rect x="174.4" y="22.7" width="1.2" height="1.2" fill="#111"/><rect x="184.0" y="17.6" width="1.2" height="1.2" fill="#111"/><rect x="180.0" y="17.3" width="1.2" height="1.2" fill="#111"/><rect x="183.6" y="14.5" width="1.2" height="1.2" fill="#111"/><rect x="177.9" y="18.6" width="1.2" height="1.2" fill="#111"/><rect x="183.7" y="15.3" width="1.2" height="1.2" fill="#111"/><rect x="178.6" y="14.2" width="1.2" height="1.2" fill="#111"/><rect x="174.5" y="13.4" width="1.2" height="1.2" fill="#111"/><rect x="177.9" y="20.5" width="1.2" height="1.2" fill="#111"/><rect x="174.3" y="13.6" width="1.2" height="1.2" fill="#111"/><rect x="175.7" y="18.0" width="1.2" height="1.2" fill="#111"/><rect x="180.6" y="11.0" width="1.2" height="1.2" fill="#111"/><rect x="179.2" y="11.8" width="1.2" height="1.2" fill="#111"/><rect x="180.8" y="12.1" width="1.2" height="1.2" fill="#111"/><rect x="172.8" y="13.3" width="1.2" height="1.2" fill="#111"/><rect x="177.3" y="11.8" width="1.2" height="1.2" fill="#111"/><rect x="178.4" y="17.0" width="1.2" height="1.2" fill="#111"/><rect x="177.9" y="17.5" width="1.2" height="1.2" fill="#111"/><rect x="181.5" y="13.1" width="1.2" height="1.2" fill="#111"/><rect x="177.6" y="16.3" width="1.2" height="1.2" fill="#111"/><rect x="170.2" y="17.8" width="1.2" height="1.2" fill="#111"/><rect x="174.0" y="13.1" width="1.2" height="1.2" fill="#111"/><rect x="175.6" y="16.8" width="1.2" height="1.2" fill="#111"/><rect x="179.0" y="18.6" width="1.2" height="1.2" fill="#111"/><rect x="174.4" y="19.6" width="1.2" height="1.2" fill="#111"/><rect x="179.4" y="14.6" width="1.2" height="1.2" fill="#111"/><rect x="177.5" y="20.1" width="1.2" height="1.2" fill="#111"/><rect x="179.5" y="19.6" width="1.2" height="1.2" fill="#111"/><rect x="178.0" y="21.5" width="1.2" height="1.2" fill="#111"/><rect x="185.0" y="17.9" width="1.2" height="1.2" fill="#111"/><rect x="172.3" y="22.0" width="1.2" height="1.2" fill="#111"/><rect x="175.1" y="10.6" width="1.2" height="1.2" fill="#111"/><rect x="169.9" y="17.8" width="1.2" height="1.2" fill="#111"/><rect x="213.3" y="19.8" width="1.1" height="1.1" fill="#111"/><rect x="208.2" y="21.4" width="1.1" height="1.1" fill="#111"/><rect x="209.2" y="14.2" width="1.1" height="1.1" fill="#111"/><rect x="209.7" y="17.1" width="1.1" height="1.1" fill="#111"/><rect x="209.7" y="17.8" width="1.1" height="1.1" fill="#111"/><rect x="204.3" y="20.1" width="1.1" height="1.1" fill="#111"/><rect x="207.4" y="18.8" width="1.1" height="1.1" fill="#111"/><rect x="206.5" y="17.0" width="1.1" height="1.1" fill="#111"/><rect x="208.9" y="11.1" width="1.1" height="1.1" fill="#111"/><rect x="210.9" y="18.8" width="1.1" height="1.1" fill="#111"/><rect x="206.6" y="10.9" width="1.1" height="1.1" fill="#111"/><rect x="207.1" y="13.3" width="1.1" height="1.1" fill="#111"/><rect x="209.8" y="16.4" width="1.1" height="1.1" fill="#111"/><rect x="214.7" y="18.5" width="1.1" height="1.1" fill="#111"/><rect x="208.6" y="16.9" width="1.1" height="1.1" fill="#111"/><rect x="203.3" y="14.5" width="1.1" height="1.1" fill="#111"/><rect x="206.1" y="16.0" width="1.1" height="1.1" fill="#111"/><rect x="210.6" y="17.1" width="1.1" height="1.1" fill="#111"/><rect x="212.9" y="13.9" width="1.1" height="1.1" fill="#111"/><rect x="210.5" y="16.0" width="1.1" height="1.1" fill="#111"/><rect x="209.5" y="17.5" width="1.1" height="1.1" fill="#111"/><rect x="208.5" y="17.1" width="1.1" height="1.1" fill="#111"/><rect x="209.4" y="20.2" width="1.1" height="1.1" fill="#111"/><rect x="209.1" y="17.4" width="1.1" height="1.1" fill="#111"/><rect x="215.7" y="17.9" width="1.1" height="1.1" fill="#111"/><rect x="211.4" y="20.3" width="1.1" height="1.1" fill="#111"/><rect x="205.9" y="19.0" width="1.1" height="1.1" fill="#111"/><rect x="212.3" y="18.0" width="1.1" height="1.1" fill="#111"/><rect x="213.0" y="19.2" width="1.1" height="1.1" fill="#111"/><rect x="213.7" y="14.1" width="1.1" height="1.1" fill="#111"/><rect x="211.1" y="14.4" width="1.1" height="1.1" fill="#111"/><rect x="214.0" y="16.9" width="1.1" height="1.1" fill="#111"/><rect x="204.9" y="16.8" width="1.1" height="1.1" fill="#111"/><rect x="206.0" y="19.8" width="1.1" height="1.1" fill="#111"/><rect x="208.6" y="10.3" width="1.1" height="1.1" fill="#111"/><rect x="208.1" y="20.2" width="1.1" height="1.1" fill="#111"/><rect x="210.7" y="14.1" width="1.1" height="1.1" fill="#111"/><rect x="211.9" y="18.5" width="1.1" height="1.1" fill="#111"/><rect x="214.2" y="19.3" width="1.1" height="1.1" fill="#111"/><rect x="210.9" y="13.5" width="1.1" height="1.1" fill="#111"/><circle cx="241.6" cy="16.4" r="7.5" fill="#bbb"/><rect x="242.8" y="17.7" width="1.1" height="1.1" fill="#111"/><rect x="241.6" y="18.2" width="1.1" height="1.1" fill="#111"/><rect x="236.4" y="18.9" width="1.1" height="1.1" fill="#111"/><rect x="241.6" y="17.9" width="1.1" height="1.1" fill="#111"/><rect x="241.2" y="15.2" width="1.1" height="1.1" fill="#111"/><rect x="242.7" y="20.0" width="1.1" height="1.1" fill="#111"/><rect x="240.2" y="17.8" width="1.1" height="1.1" fill="#111"/><rect x="238.0" y="18.3" width="1.1" height="1.1" fill="#111"/><rect x="241.6" y="10.8" width="1.1" height="1.1" fill="#111"/><rect x="246.5" y="12.6" width="1.1" height="1.1" fill="#111"/><rect x="241.9" y="10.7" width="1.1" height="1.1" fill="#111"/><rect x="234.9" y="18.9" width="1.1" height="1.1" fill="#111"/><rect x="237.2" y="10.0" width="1.1" height="1.1" fill="#111"/><rect x="240.7" y="10.0" width="1.1" height="1.1" fill="#111"/><rect x="240.8" y="23.4" width="1.1" height="1.1" fill="#111"/><rect x="239.8" y="18.0" width="1.1" height="1.1" fill="#111"/><rect x="244.1" y="17.5" width="1.1" height="1.1" fill="#111"/><rect x="241.1" y="22.7" width="1.1" height="1.1" fill="#111"/><rect x="241.2" y="17.9" width="1.1" height="1.1" fill="#111"/><rect x="242.0" y="10.8" width="1.1" height="1.1" fill="#111"/><rect x="242.9" y="16.6" width="1.1" height="1.1" fill="#111"/><rect x="244.5" y="19.5" width="1.1" height="1.1" fill="#111"/><rect x="246.5" y="10.4" width="1.1" height="1.1" fill="#111"/><rect x="239.0" y="14.3" width="1.1" height="1.1" fill="#111"/><rect x="237.6" y="18.3" width="1.1" height="1.1" fill="#111"/><rect x="241.3" y="16.9" width="1.1" height="1.1" fill="#111"/><rect x="235.4" y="12.8" width="1.1" height="1.1" fill="#111"/><rect x="241.3" y="14.5" width="1.1" height="1.1" fill="#111"/><rect x="238.8" y="15.9" width="1.1" height="1.1" fill="#111"/><rect x="240.3" y="11.6" width="1.1" height="1.1" fill="#111"/><rect x="248.0" y="13.8" width="1.1" height="1.1" fill="#111"/><rect x="244.5" y="19.1" width="1.1" height="1.1" fill="#111"/><rect x="245.9" y="13.8" width="1.1" height="1.1" fill="#111"/><rect x="237.1" y="18.4" width="1.1" height="1.1" fill="#111"/><rect x="242.4" y="8.8" width="1.1" height="1.1" fill="#111"/><rect x="233.9" y="14.8" width="1.1" height="1.1" fill="#111"/><rect x="239.9" y="15.2" width="1.1" height="1.1" fill="#111"/><rect x="243.4" y="12.0" width="1.1" height="1.1" fill="#111"/><rect x="249.0" y="18.9" width="1.1" height="1.1" fill="#111"/><rect x="247.2" y="17.6" width="1.1" height="1.1" fill="#111"/><rect x="234.2" y="17.2" width="1.1" height="1.1" fill="#111"/><rect x="239.1" y="18.4" width="1.1" height="1.1" fill="#111"/><rect x="241.0" y="19.4" width="1.1" height="1.1" fill="#111"/><rect x="237.6" y="14.8" width="1.1" height="1.1" fill="#111"/><rect x="241.6" y="13.0" width="1.1" height="1.1" fill="#111"/><rect x="239.5" y="19.2" width="1.1" height="1.1" fill="#111"/><rect x="248.7" y="15.6" width="1.1" height="1.1" fill="#111"/><rect x="245.1" y="11.5" width="1.1" height="1.1" fill="#111"/><rect x="239.5" y="17.9" width="1.1" height="1.1" fill="#111"/><rect x="244.1" y="11.9" width="1.1" height="1.1" fill="#111"/><rect x="244.2" y="17.0" width="1.1" height="1.1" fill="#111"/><rect x="246.9" y="20.2" width="1.1" height="1.1" fill="#111"/><rect x="244.0" y="14.6" width="1.1" height="1.1" fill="#111"/><rect x="242.7" y="12.5" width="1.1" height="1.1" fill="#111"/><rect x="238.6" y="9.7" width="1.1" height="1.1" fill="#111"/><rect x="236.5" y="11.5" width="1.1" height="1.1" fill="#111"/><rect x="241.2" y="16.8" width="1.1" height="1.1" fill="#111"/><rect x="235.8" y="16.0" width="1.1" height="1.1" fill="#111"/><rect x="243.4" y="20.6" width="1.1" height="1.1" fill="#111"/><rect x="241.2" y="17.2" width="1.1" height="1.1" fill="#111"/><rect x="239.8" y="20.6" width="1.1" height="1.1" fill="#111"/><rect x="235.1" y="17.4" width="1.1" height="1.1" fill="#111"/><rect x="235.2" y="21.1" width="1.1" height="1.1" fill="#111"/><rect x="244.6" y="9.4" width="1.1" height="1.1" fill="#111"/><rect x="239.3" y="10.5" width="1.1" height="1.1" fill="#111"/><rect x="234.7" y="14.8" width="1.1" height="1.1" fill="#111"/><rect x="237.7" y="20.8" width="1.1" height="1.1" fill="#111"/><rect x="239.2" y="11.5" width="1.1" height="1.1" fill="#111"/><rect x="241.2" y="18.1" width="1.1" height="1.1" fill="#111"/><rect x="245.2" y="18.6" width="1.1" height="1.1" fill="#111"/><circle cx="17.300000000000182" cy="48.900000000000006" r="6.5" fill="url(#sg)"/><rect x="45.7" y="46.8" width="1.2" height="1.2" fill="#111"/><rect x="48.9" y="46.5" width="1.2" height="1.2" fill="#111"/><rect x="51.5" y="47.9" width="1.2" height="1.2" fill="#111"/><rect x="49.2" y="47.9" width="1.2" height="1.2" fill="#111"/><rect x="49.5" y="45.0" width="1.2" height="1.2" fill="#111"/><rect x="54.0" y="47.6" width="1.2" height="1.2" fill="#111"/><rect x="47.7" y="44.7" width="1.2" height="1.2" fill="#111"/><rect x="49.2" y="45.2" width="1.2" height="1.2" fill="#111"/><rect x="50.3" y="52.2" width="1.2" height="1.2" fill="#111"/><rect x="51.1" y="47.6" width="1.2" height="1.2" fill="#111"/><rect x="52.9" y="48.3" width="1.2" height="1.2" fill="#111"/><rect x="49.3" y="49.0" width="1.2" height="1.2" fill="#111"/><rect x="48.1" y="50.0" width="1.2" height="1.2" fill="#111"/><rect x="46.8" y="45.1" width="1.2" height="1.2" fill="#111"/><rect x="52.6" y="46.9" width="1.2" height="1.2" fill="#111"/><rect x="48.4" y="49.8" width="1.2" height="1.2" fill="#111"/><rect x="48.1" y="45.7" width="1.2" height="1.2" fill="#111"/><rect x="48.8" y="46.2" width="1.2" height="1.2" fill="#111"/><rect x="50.9" y="47.6" width="1.2" height="1.2" fill="#111"/><rect x="48.7" y="51.0" width="1.2" height="1.2" fill="#111"/><rect x="46.1" y="45.6" width="1.2" height="1.2" fill="#111"/><rect x="51.3" y="52.2" width="1.2" height="1.2" fill="#111"/><rect x="49.7" y="46.9" width="1.2" height="1.2" fill="#111"/><rect x="52.7" y="50.3" width="1.2" height="1.2" fill="#111"/><rect x="51.7" y="44.8" width="1.2" height="1.2" fill="#111"/><rect x="80.9" y="44.5" width="1.0" height="1.0" fill="#111"/><rect x="77.0" y="51.2" width="1.0" height="1.0" fill="#111"/><rect x="84.6" y="46.8" width="1.0" height="1.0" fill="#111"/><rect x="80.5" y="54.3" width="1.0" height="1.0" fill="#111"/><rect x="84.2" y="48.3" width="1.0" height="1.0" fill="#111"/><rect x="83.6" y="49.3" width="1.0" height="1.0" fill="#111"/><rect x="76.4" y="46.8" width="1.0" height="1.0" fill="#111"/><rect x="82.7" y="51.4" width="1.0" height="1.0" fill="#111"/><rect x="76.8" y="45.7" width="1.0" height="1.0" fill="#111"/><rect x="79.3" y="43.1" width="1.0" height="1.0" fill="#111"/><rect x="86.0" y="50.7" width="1.0" height="1.0" fill="#111"/><rect x="85.3" y="42.6" width="1.0" height="1.0" fill="#111"/><rect x="78.7" y="55.1" width="1.0" height="1.0" fill="#111"/><rect x="77.2" y="43.2" width="1.0" height="1.0" fill="#111"/><rect x="82.3" y="54.9" width="1.0" height="1.0" fill="#111"/><rect x="84.1" y="44.9" width="1.0" height="1.0" fill="#111"/><rect x="83.8" y="50.6" width="1.0" height="1.0" fill="#111"/><rect x="82.5" y="50.4" width="1.0" height="1.0" fill="#111"/><rect x="84.8" y="53.5" width="1.0" height="1.0" fill="#111"/><rect x="86.6" y="52.8" width="1.0" height="1.0" fill="#111"/><rect x="81.0" y="42.3" width="1.0" height="1.0" fill="#111"/><rect x="83.6" y="43.1" width="1.0" height="1.0" fill="#111"/><rect x="88.0" y="45.5" width="1.0" height="1.0" fill="#111"/><rect x="76.4" y="43.7" width="1.0" height="1.0" fill="#111"/><rect x="83.1" y="50.1" width="1.0" height="1.0" fill="#111"/><rect x="84.2" y="50.0" width="1.0" height="1.0" fill="#111"/><rect x="78.2" y="52.2" width="1.0" height="1.0" fill="#111"/><rect x="78.9" y="43.2" width="1.0" height="1.0" fill="#111"/><rect x="85.3" y="51.1" width="1.0" height="1.0" fill="#111"/><rect x="77.5" y="47.8" width="1.0" height="1.0" fill="#111"/><rect x="85.6" y="52.6" width="1.0" height="1.0" fill="#111"/><rect x="77.3" y="53.1" width="1.0" height="1.0" fill="#111"/><rect x="74.2" y="49.1" width="1.0" height="1.0" fill="#111"/><rect x="83.0" y="48.4" width="1.0" height="1.0" fill="#111"/><rect x="81.9" y="42.7" width="1.0" height="1.0" fill="#111"/><rect x="81.0" y="50.9" width="1.0" height="1.0" fill="#111"/><rect x="77.6" y="49.4" width="1.0" height="1.0" fill="#111"/><rect x="81.0" y="41.8" width="1.0" height="1.0" fill="#111"/><rect x="78.9" y="51.3" width="1.0" height="1.0" fill="#111"/><rect x="75.5" y="48.9" width="1.0" height="1.0" fill="#111"/><rect x="82.9" y="43.7" width="1.0" height="1.0" fill="#111"/><rect x="80.4" y="52.6" width="1.0" height="1.0" fill="#111"/><rect x="84.5" y="44.8" width="1.0" height="1.0" fill="#111"/><rect x="85.8" y="50.3" width="1.0" height="1.0" fill="#111"/><rect x="82.0" y="54.8" width="1.0" height="1.0" fill="#111"/><rect x="84.6" y="50.4" width="1.0" height="1.0" fill="#111"/><rect x="85.5" y="51.6" width="1.0" height="1.0" fill="#111"/><rect x="86.7" y="48.4" width="1.0" height="1.0" fill="#111"/><rect x="76.1" y="53.6" width="1.0" height="1.0" fill="#111"/><rect x="84.9" y="51.1" width="1.0" height="1.0" fill="#111"/><rect x="81.7" y="48.6" width="1.0" height="1.0" fill="#111"/><rect x="82.0" y="44.9" width="1.0" height="1.0" fill="#111"/><rect x="84.8" y="49.2" width="1.0" height="1.0" fill="#111"/><rect x="77.5" y="50.0" width="1.0" height="1.0" fill="#111"/><rect x="80.3" y="48.8" width="1.0" height="1.0" fill="#111"/><rect x="83.0" y="56.1" width="1.0" height="1.0" fill="#111"/><rect x="77.1" y="50.6" width="1.0" height="1.0" fill="#111"/><rect x="84.5" y="50.7" width="1.0" height="1.0" fill="#111"/><rect x="87.3" y="47.2" width="1.0" height="1.0" fill="#111"/><rect x="80.3" y="48.8" width="1.0" height="1.0" fill="#111"/><rect x="76.5" y="52.9" width="1.0" height="1.0" fill="#111"/><rect x="76.5" y="51.1" width="1.0" height="1.0" fill="#111"/><rect x="86.3" y="45.6" width="1.0" height="1.0" fill="#111"/><rect x="80.9" y="48.1" width="1.0" height="1.0" fill="#111"/><rect x="87.9" y="49.9" width="1.0" height="1.0" fill="#111"/><rect x="75.6" y="52.5" width="1.0" height="1.0" fill="#111"/><rect x="84.8" y="42.6" width="1.0" height="1.0" fill="#111"/><rect x="76.1" y="54.1" width="1.0" height="1.0" fill="#111"/><rect x="81.8" y="41.9" width="1.0" height="1.0" fill="#111"/><rect x="85.4" y="54.1" width="1.0" height="1.0" fill="#111"/><rect x="108.4" y="51.7" width="1.6" height="1.6" fill="#111"/><rect x="116.0" y="48.8" width="1.6" height="1.6" fill="#111"/><rect x="111.2" y="50.2" width="1.6" height="1.6" fill="#111"/><rect x="110.8" y="49.4" width="1.6" height="1.6" fill="#111"/><rect x="112.7" y="47.4" width="1.6" height="1.6" fill="#111"/><rect x="115.4" y="52.2" width="1.6" height="1.6" fill="#111"/><rect x="116.6" y="50.4" width="1.6" height="1.6" fill="#111"/><rect x="118.1" y="45.5" width="1.6" height="1.6" fill="#111"/><rect x="113.8" y="49.4" width="1.6" height="1.6" fill="#111"/><rect x="116.4" y="43.7" width="1.6" height="1.6" fill="#111"/><rect x="112.1" y="47.8" width="1.6" height="1.6" fill="#111"/><rect x="114.1" y="54.6" width="1.6" height="1.6" fill="#111"/><rect x="114.3" y="48.6" width="1.6" height="1.6" fill="#111"/><rect x="115.0" y="52.2" width="1.6" height="1.6" fill="#111"/><rect x="113.1" y="53.9" width="1.6" height="1.6" fill="#111"/><rect x="110.0" y="52.6" width="1.6" height="1.6" fill="#111"/><rect x="115.9" y="52.2" width="1.6" height="1.6" fill="#111"/><rect x="118.4" y="48.1" width="1.6" height="1.6" fill="#111"/><rect x="115.0" y="49.8" width="1.6" height="1.6" fill="#111"/><rect x="111.5" y="46.3" width="1.6" height="1.6" fill="#111"/><rect x="111.0" y="51.7" width="1.6" height="1.6" fill="#111"/><rect x="108.5" y="46.0" width="1.6" height="1.6" fill="#111"/><rect x="113.8" y="53.2" width="1.6" height="1.6" fill="#111"/><rect x="113.3" y="53.1" width="1.6" height="1.6" fill="#111"/><rect x="113.4" y="47.1" width="1.6" height="1.6" fill="#111"/><rect x="108.8" y="49.5" width="1.6" height="1.6" fill="#111"/><rect x="118.7" y="49.2" width="1.6" height="1.6" fill="#111"/><rect x="110.1" y="50.8" width="1.6" height="1.6" fill="#111"/><rect x="109.6" y="45.6" width="1.6" height="1.6" fill="#111"/><rect x="117.3" y="50.3" width="1.6" height="1.6" fill="#111"/><rect x="116.9" y="49.7" width="1.6" height="1.6" fill="#111"/><rect x="113.3" y="49.4" width="1.6" height="1.6" fill="#111"/><rect x="112.5" y="52.5" width="1.6" height="1.6" fill="#111"/><rect x="110.4" y="44.2" width="1.6" height="1.6" fill="#111"/><rect x="110.8" y="51.9" width="1.6" height="1.6" fill="#111"/><rect x="112.3" y="43.3" width="1.6" height="1.6" fill="#111"/><rect x="119.3" y="47.0" width="1.6" height="1.6" fill="#111"/><rect x="112.9" y="50.8" width="1.6" height="1.6" fill="#111"/><rect x="114.8" y="48.4" width="1.6" height="1.6" fill="#111"/><rect x="108.9" y="50.5" width="1.6" height="1.6" fill="#111"/><rect x="110.3" y="48.3" width="1.6" height="1.6" fill="#111"/><rect x="116.2" y="47.6" width="1.6" height="1.6" fill="#111"/><rect x="108.5" y="47.2" width="1.6" height="1.6" fill="#111"/><rect x="115.7" y="51.3" width="1.6" height="1.6" fill="#111"/><rect x="109.3" y="49.1" width="1.6" height="1.6" fill="#111"/><rect x="114.6" y="52.5" width="1.6" height="1.6" fill="#111"/><rect x="114.9" y="49.4" width="1.6" height="1.6" fill="#111"/><rect x="112.6" y="50.5" width="1.6" height="1.6" fill="#111"/><rect x="116.2" y="48.4" width="1.6" height="1.6" fill="#111"/><rect x="112.8" y="54.0" width="1.6" height="1.6" fill="#111"/><circle cx="145.5" cy="48.9" r="7.5" fill="#666"/><rect x="145.4" y="45.5" width="1.2" height="1.2" fill="#111"/><rect x="148.3" y="43.9" width="1.2" height="1.2" fill="#111"/><rect x="141.2" y="52.6" width="1.2" height="1.2" fill="#111"/><rect x="145.6" y="52.3" width="1.2" height="1.2" fill="#111"/><rect x="148.8" y="45.7" width="1.2" height="1.2" fill="#111"/><rect x="147.7" y="47.3" width="1.2" height="1.2" fill="#111"/><rect x="146.4" y="49.9" width="1.2" height="1.2" fill="#111"/><rect x="145.2" y="43.6" width="1.2" height="1.2" fill="#111"/><rect x="146.7" y="49.0" width="1.2" height="1.2" fill="#111"/><rect x="147.8" y="44.5" width="1.2" height="1.2" fill="#111"/><rect x="146.3" y="48.1" width="1.2" height="1.2" fill="#111"/><rect x="143.8" y="47.8" width="1.2" height="1.2" fill="#111"/><rect x="144.5" y="43.4" width="1.2" height="1.2" fill="#111"/><rect x="143.2" y="46.9" width="1.2" height="1.2" fill="#111"/><rect x="147.5" y="48.3" width="1.2" height="1.2" fill="#111"/><rect x="151.0" y="51.2" width="1.2" height="1.2" fill="#111"/><rect x="146.8" y="49.7" width="1.2" height="1.2" fill="#111"/><rect x="139.9" y="50.3" width="1.2" height="1.2" fill="#111"/><rect x="150.3" y="45.0" width="1.2" height="1.2" fill="#111"/><rect x="150.8" y="51.3" width="1.2" height="1.2" fill="#111"/><rect x="146.7" y="47.1" width="1.2" height="1.2" fill="#111"/><rect x="145.6" y="45.6" width="1.2" height="1.2" fill="#111"/><rect x="145.5" y="49.0" width="1.2" height="1.2" fill="#111"/><rect x="145.8" y="43.9" width="1.2" height="1.2" fill="#111"/><rect x="149.4" y="46.2" width="1.2" height="1.2" fill="#111"/><rect x="147.2" y="51.4" width="1.2" height="1.2" fill="#111"/><rect x="144.9" y="56.1" width="1.2" height="1.2" fill="#111"/><rect x="146.0" y="50.6" width="1.2" height="1.2" fill="#111"/><rect x="144.6" y="50.2" width="1.2" height="1.2" fill="#111"/><rect x="140.5" y="51.5" width="1.2" height="1.2" fill="#111"/><rect x="144.0" y="46.8" width="1.2" height="1.2" fill="#111"/><rect x="148.7" y="52.6" width="1.2" height="1.2" fill="#111"/><rect x="143.8" y="44.6" width="1.2" height="1.2" fill="#111"/><rect x="139.2" y="45.7" width="1.2" height="1.2" fill="#111"/><rect x="147.6" y="51.6" width="1.2" height="1.2" fill="#111"/><rect x="140.4" y="49.1" width="1.2" height="1.2" fill="#111"/><rect x="149.8" y="45.8" width="1.2" height="1.2" fill="#111"/><rect x="143.2" y="45.1" width="1.2" height="1.2" fill="#111"/><rect x="147.0" y="42.3" width="1.2" height="1.2" fill="#111"/><rect x="145.0" y="50.8" width="1.2" height="1.2" fill="#111"/><path d="M171.5 43.9L183.5 47.9" stroke="#111" stroke-width="1.3"/><path d="M171.5 46.9L183.5 50.9" stroke="#111" stroke-width="1.3"/><path d="M171.5 49.9L183.5 53.9" stroke="#111" stroke-width="1.3"/><path d="M171.5 52.9L183.5 56.9" stroke="#111" stroke-width="1.3"/><rect x="209.3" y="52.7" width="1.0" height="1.0" fill="#111"/><rect x="211.9" y="46.9" width="1.0" height="1.0" fill="#111"/><rect x="205.8" y="45.0" width="1.0" height="1.0" fill="#111"/><rect x="211.4" y="48.4" width="1.0" height="1.0" fill="#111"/><rect x="210.0" y="45.3" width="1.0" height="1.0" fill="#111"/><rect x="213.7" y="52.1" width="1.0" height="1.0" fill="#111"/><rect x="212.3" y="44.7" width="1.0" height="1.0" fill="#111"/><rect x="216.0" y="51.0" width="1.0" height="1.0" fill="#111"/><rect x="205.5" y="52.5" width="1.0" height="1.0" fill="#111"/><rect x="209.0" y="45.8" width="1.0" height="1.0" fill="#111"/><rect x="206.5" y="50.9" width="1.0" height="1.0" fill="#111"/><rect x="210.6" y="49.7" width="1.0" height="1.0" fill="#111"/><rect x="208.7" y="44.9" width="1.0" height="1.0" fill="#111"/><rect x="210.4" y="47.9" width="1.0" height="1.0" fill="#111"/><rect x="208.7" y="51.3" width="1.0" height="1.0" fill="#111"/><rect x="215.2" y="46.8" width="1.0" height="1.0" fill="#111"/><rect x="213.2" y="46.1" width="1.0" height="1.0" fill="#111"/><rect x="212.8" y="51.4" width="1.0" height="1.0" fill="#111"/><rect x="209.6" y="49.7" width="1.0" height="1.0" fill="#111"/><rect x="206.4" y="47.6" width="1.0" height="1.0" fill="#111"/><rect x="213.1" y="51.8" width="1.0" height="1.0" fill="#111"/><rect x="215.7" y="46.1" width="1.0" height="1.0" fill="#111"/><rect x="207.8" y="49.3" width="1.0" height="1.0" fill="#111"/><rect x="209.7" y="47.0" width="1.0" height="1.0" fill="#111"/><rect x="208.0" y="48.5" width="1.0" height="1.0" fill="#111"/><rect x="214.3" y="48.5" width="1.0" height="1.0" fill="#111"/><rect x="206.5" y="50.1" width="1.0" height="1.0" fill="#111"/><rect x="203.0" y="46.7" width="1.0" height="1.0" fill="#111"/><rect x="207.0" y="50.1" width="1.0" height="1.0" fill="#111"/><rect x="202.9" y="48.3" width="1.0" height="1.0" fill="#111"/><rect x="205.6" y="52.5" width="1.0" height="1.0" fill="#111"/><rect x="212.6" y="47.2" width="1.0" height="1.0" fill="#111"/><rect x="211.3" y="44.5" width="1.0" height="1.0" fill="#111"/><rect x="210.3" y="49.8" width="1.0" height="1.0" fill="#111"/><rect x="213.6" y="47.2" width="1.0" height="1.0" fill="#111"/><rect x="203.3" y="51.2" width="1.0" height="1.0" fill="#111"/><rect x="205.4" y="46.8" width="1.0" height="1.0" fill="#111"/><rect x="208.3" y="54.6" width="1.0" height="1.0" fill="#111"/><rect x="209.3" y="53.3" width="1.0" height="1.0" fill="#111"/><rect x="209.8" y="43.7" width="1.0" height="1.0" fill="#111"/><rect x="211.3" y="50.9" width="1.0" height="1.0" fill="#111"/><rect x="207.5" y="43.5" width="1.0" height="1.0" fill="#111"/><rect x="215.1" y="53.1" width="1.0" height="1.0" fill="#111"/><rect x="211.1" y="50.7" width="1.0" height="1.0" fill="#111"/><rect x="213.1" y="51.2" width="1.0" height="1.0" fill="#111"/><rect x="204.8" y="44.5" width="1.0" height="1.0" fill="#111"/><rect x="212.4" y="53.7" width="1.0" height="1.0" fill="#111"/><rect x="213.5" y="52.0" width="1.0" height="1.0" fill="#111"/><rect x="209.5" y="52.7" width="1.0" height="1.0" fill="#111"/><rect x="214.9" y="50.8" width="1.0" height="1.0" fill="#111"/><rect x="213.8" y="53.0" width="1.0" height="1.0" fill="#111"/><rect x="206.9" y="53.3" width="1.0" height="1.0" fill="#111"/><rect x="206.6" y="45.4" width="1.0" height="1.0" fill="#111"/><rect x="214.2" y="44.2" width="1.0" height="1.0" fill="#111"/><rect x="208.8" y="52.5" width="1.0" height="1.0" fill="#111"/><circle cx="241.55000000000018" cy="48.900000000000006" r="6.5" fill="url(#sg)"/><circle cx="17.300000000000182" cy="80.80000000000001" r="6" fill="url(#sg)"/><circle cx="49.450000000000045" cy="80.80000000000001" r="6" fill="url(#sg)"/><circle cx="81.5" cy="80.8" r="7" fill="#000"/><ellipse cx="113.6" cy="80.8" rx="8" ry="3.2" fill="#000" transform="rotate(-40 113.6 80.8)"/><ellipse cx="145.5" cy="80.8" rx="1.3" ry="4.5" fill="#222"/><circle cx="177.5" cy="80.8" r="4.8" fill="#000"/></svg>
<div class="t" style="left:1084.00px;top:129.64px;font-size:11px;font-weight:normal;color:#111;transform:scaleX(1.0135);transform-origin:0 0;">292</div>
<div class="t" style="left:1119.25px;top:129.64px;font-size:11px;font-weight:normal;color:#111;transform:scaleX(1.0135);transform-origin:0 0;">38</div>
<div class="t" style="left:1151.35px;top:129.64px;font-size:11px;font-weight:normal;color:#111;transform:scaleX(1.0135);transform-origin:0 0;">38</div>
<div class="t" style="left:1183.40px;top:129.64px;font-size:11px;font-weight:normal;color:#111;transform:scaleX(1.0135);transform-origin:0 0;">40</div>
<div class="t" style="left:1215.35px;top:129.64px;font-size:11px;font-weight:normal;color:#111;transform:scaleX(1.0135);transform-origin:0 0;">45</div>
<div class="t" style="left:1247.35px;top:129.64px;font-size:11px;font-weight:normal;color:#111;transform:scaleX(1.0135);transform-origin:0 0;">90</div>
<div class="t" style="left:1279.30px;top:129.64px;font-size:11px;font-weight:normal;color:#111;transform:scaleX(1.0135);transform-origin:0 0;">21</div>
<div class="t" style="left:1311.35px;top:129.64px;font-size:11px;font-weight:normal;color:#111;transform:scaleX(1.0135);transform-origin:0 0;">60</div>
<div class="t" style="left:1087.10px;top:161.74px;font-size:11px;font-weight:normal;color:#111;transform:scaleX(1.0135);transform-origin:0 0;">65</div>
<div class="t" style="left:1119.25px;top:161.74px;font-size:11px;font-weight:normal;color:#111;transform:scaleX(1.0135);transform-origin:0 0;">14</div>
<div class="t" style="left:1151.35px;top:161.74px;font-size:11px;font-weight:normal;color:#111;transform:scaleX(1.0135);transform-origin:0 0;">43</div>
<div class="t" style="left:1183.40px;top:161.74px;font-size:11px;font-weight:normal;color:#111;transform:scaleX(1.0135);transform-origin:0 0;">23</div>
<div class="t" style="left:1215.35px;top:161.74px;font-size:11px;font-weight:normal;color:#111;transform:scaleX(1.0135);transform-origin:0 0;">58</div>
<div class="t" style="left:1247.35px;top:161.74px;font-size:11px;font-weight:normal;color:#111;transform:scaleX(1.0135);transform-origin:0 0;">75</div>
<div class="t" style="left:1279.30px;top:161.74px;font-size:11px;font-weight:normal;color:#111;transform:scaleX(1.0135);transform-origin:0 0;">59</div>
<div class="t" style="left:1311.35px;top:161.74px;font-size:11px;font-weight:normal;color:#111;transform:scaleX(1.0135);transform-origin:0 0;">21</div>
<div class="t" style="left:1087.10px;top:193.74px;font-size:11px;font-weight:normal;color:#111;transform:scaleX(1.0135);transform-origin:0 0;">25</div>
<div class="t" style="left:1119.25px;top:193.74px;font-size:11px;font-weight:normal;color:#111;transform:scaleX(1.0135);transform-origin:0 0;">20</div>
<div class="t" style="left:1151.35px;top:193.74px;font-size:11px;font-weight:normal;color:#111;transform:scaleX(1.0135);transform-origin:0 0;">25</div>
<div class="t" style="left:1183.40px;top:193.74px;font-size:11px;font-weight:normal;color:#111;transform:scaleX(1.0135);transform-origin:0 0;">45</div>
<div class="t" style="left:1212.25px;top:193.74px;font-size:11px;font-weight:normal;color:#111;transform:scaleX(1.0135);transform-origin:0 0;">131</div>
<div class="t" style="left:1247.35px;top:193.74px;font-size:11px;font-weight:normal;color:#111;transform:scaleX(1.0135);transform-origin:0 0;">13</div>
<div class="a" style="left:1334px;top:106px;width:16px;height:100px;background:#f0f0f0"></div>
<svg class="a" style="left:1339px;top:113px;" width="9" height="6" viewBox="0 0 9 6"><path d="M0.5 5L4.5 1L8.5 5" fill="none" stroke="#222" stroke-width="1.4"/></svg>
<div class="a" style="left:1336px;top:172px;width:12px;height:17px;background:#cacaca"></div>
<svg class="a" style="left:1339px;top:195px;" width="9" height="6" viewBox="0 0 9 6"><path d="M0.5 1L4.5 5L8.5 1" fill="none" stroke="#222" stroke-width="1.4"/></svg>
<div class="t" style="left:1076.00px;top:214.04px;font-size:11px;font-weight:normal;color:#111;transform:scaleX(0.9492);transform-origin:0 0;">Кегль</div>
<svg class="a" style="left:1282px;top:214px;" width="14" height="14" viewBox="0 0 14 14"><path d="M11 5A5 5 0 1 1 6.5 2" fill="none" stroke="#111" stroke-width="2.2"/><path d="M5 0L9.5 2.3L5.5 5.5Z" fill="#111"/></svg>
<div class="a" style="left:1301px;top:213px;width:52px;height:16px;border:1px solid #2f6fd0;background:#fff"></div>
<div class="t" style="left:1306.00px;top:215.54px;font-size:11px;font-weight:normal;color:#111;transform:scaleX(0.8582);transform-origin:0 0;">12</div>
<div class="a" style="left:1317px;top:215px;width:1px;height:12px;background:#000"></div>
<div class="t" style="left:1320.00px;top:215.54px;font-size:11px;font-weight:normal;color:#111;transform:scaleX(1.0940);transform-origin:0 0;">пикс.</div>
<div class="a" style="left:1078px;top:237px;width:273px;height:2px;background:#f2f2f2;border-top:1px solid #c0c0c0"></div>
<svg class="a" style="left:1087px;top:232px;" width="10" height="12" viewBox="0 0 10 12"><path d="M0.5 4L5 0.5L9.5 4V11.5H0.5Z" fill="#1a6ad0" stroke="#0d3f88"/></svg>
<div class="a" style="left:1076px;top:252px;width:11px;height:11px;border:1px solid #222;background:#f8f8f8"></div>
<div class="t" style="left:1090.00px;top:252.54px;font-size:11px;font-weight:normal;color:#111;transform:scaleX(0.9646);transform-origin:0 0;">Отразить X</div>
<div class="a" style="left:1149px;top:252px;width:11px;height:11px;border:1px solid #222;background:#f8f8f8"></div>
<div class="t" style="left:1162.00px;top:252.54px;font-size:11px;font-weight:normal;color:#111;transform:scaleX(0.9646);transform-origin:0 0;">Отразить Y</div>
<div class="a" style="left:1235px;top:248px;width:77px;height:77px;border:1px dotted #333;background:#fff"></div>
<svg class="a" style="left:1235px;top:248px;" width="77" height="77" viewBox="0 0 77 77"><circle cx="38.5" cy="38.5" r="25" fill="none" stroke="#111" stroke-width="1.1"/><path d="M6 38.5H70M38.5 6V72" stroke="#111" stroke-width="1.1"/><path d="M66 35L71 38.5L66 42" fill="none" stroke="#111" stroke-width="1.1"/><circle cx="38.5" cy="13.5" r="1.8" fill="#111"/><circle cx="38.5" cy="63.5" r="1.8" fill="#111"/></svg>
<div class="t" style="left:1140.00px;top:281.55px;font-size:11px;font-weight:normal;color:#111;transform:scaleX(0.9760);transform-origin:0 0;">Угол:</div>
<div class="a" style="left:1169px;top:281px;width:48px;height:16px;border:1px solid #555;background:#fff"></div>
<div class="t" style="left:1175.00px;top:283.05px;font-size:11px;font-weight:normal;color:#111;transform:scaleX(1.1411);transform-origin:0 0;">0°</div>
<div class="t" style="left:1130.00px;top:306.05px;font-size:11px;font-weight:normal;color:#111;transform:scaleX(0.9375);transform-origin:0 0;">Форма:</div>
<div class="a" style="left:1169px;top:305px;width:48px;height:16px;border:1px solid #555;background:#fff"></div>
<div class="t" style="left:1175.00px;top:307.55px;font-size:11px;font-weight:normal;color:#111;transform:scaleX(0.8886);transform-origin:0 0;">100%</div>
<div class="t" style="left:1076.00px;top:329.05px;font-size:11px;font-weight:normal;color:#9e9e9e;">Жесткость</div>
<div class="a" style="left:1306px;top:329px;width:46px;height:14px;border:1px solid #bdbdbd;background:#d9d9d9"></div>
<div class="a" style="left:1078px;top:354px;width:273px;height:2px;background:#f2f2f2;border-top:1px solid #c0c0c0"></div>
<div class="a" style="left:1076px;top:366px;width:11px;height:11px;border:1px solid #222;background:#f8f8f8"></div>
<svg class="a" style="left:1077px;top:367px;" width="9" height="9" viewBox="0 0 9 9"><path d="M1.5 4.5L3.5 7L8 1.5" fill="none" stroke="#111" stroke-width="1.3"/></svg>
<div class="t" style="left:1090.00px;top:366.05px;font-size:11px;font-weight:normal;color:#111;transform:scaleX(0.9251);transform-origin:0 0;">Интервалы</div>
<div class="a" style="left:1306px;top:364px;width:47px;height:16px;border:1px solid #555;background:#fff"></div>
<div class="t" style="left:1311.00px;top:366.55px;font-size:11px;font-weight:normal;color:#111;transform:scaleX(0.8886);transform-origin:0 0;">430%</div>
<div class="a" style="left:1078px;top:389px;width:273px;height:2px;background:#f2f2f2;border-top:1px solid #c0c0c0"></div>
<svg class="a" style="left:1309px;top:384px;" width="10" height="12" viewBox="0 0 10 12"><path d="M0.5 4L5 0.5L9.5 4V11.5H0.5Z" fill="#1a6ad0" stroke="#0d3f88"/></svg>
<div class="a" style="left:921px;top:433px;width:432px;height:83px;background:#fff;border:1px solid #9a9a9a"></div>
<svg class="a" style="left:921px;top:433px;" width="432" height="83" viewBox="0 0 432 83"><path d="M24 42C60 35 95 29 129 30C180 31 240 55 306 54C350 53 380 46 404 41" fill="none" stroke="#111" stroke-width="2.8" stroke-dasharray="6.5 3.5"/></svg>
<div class="a" style="left:918px;top:522px;width:430px;height:1px;background:#aaaaaa"></div>
<div class="a" style="left:918px;top:523px;width:430px;height:1px;background:#f0f0f0"></div>
<svg class="a" style="left:1262px;top:524px;" width="22" height="12" viewBox="0 0 22 12"><ellipse cx="7" cy="5" rx="6" ry="3.5" fill="#eee" stroke="#555"/><circle cx="7" cy="5" r="1.8" fill="#555"/><path d="M10 11L19 2" stroke="#555" stroke-width="2.2"/></svg>
<svg class="a" style="left:1297px;top:525px;" width="12" height="11" viewBox="0 0 12 11"><rect x="0.5" y="0.5" width="11" height="10" fill="#f4f4f4" stroke="#222"/><path d="M2 3H5M7 3H10M2 5.5H5M7 5.5H10M2 8H10" stroke="#222"/></svg>
<svg class="a" style="left:1326px;top:525px;" width="10" height="11" viewBox="0 0 10 11"><rect x="0.5" y="0.5" width="9" height="10" fill="#f4f4f4" stroke="#222"/><path d="M3 5H6V8" fill="none" stroke="#222"/></svg>
<svg class="a" style="left:1350px;top:528px;" width="8" height="8" viewBox="0 0 8 8"><rect x="7" y="7" width="1" height="1" fill="#777"/><rect x="7" y="5" width="1" height="1" fill="#777"/><rect x="7" y="3" width="1" height="1" fill="#777"/><rect x="7" y="1" width="1" height="1" fill="#777"/><rect x="5" y="7" width="1" height="1" fill="#777"/><rect x="5" y="5" width="1" height="1" fill="#777"/><rect x="5" y="3" width="1" height="1" fill="#777"/><rect x="3" y="7" width="1" height="1" fill="#777"/><rect x="3" y="5" width="1" height="1" fill="#777"/><rect x="1" y="7" width="1" height="1" fill="#777"/></svg>
<div class="a" style="left:914px;top:539px;width:447px;height:3px;background:#222"></div>
<div class="a" style="left:914px;top:542px;width:447px;height:16px;background:linear-gradient(#8a8a8a,#7a7a7a)"></div>
<div class="a" style="left:914px;top:542px;width:68px;height:16px;background:linear-gradient(#9e9e9e,#8c8c8c)"></div>
<div class="a" style="left:982px;top:542px;width:1px;height:16px;background:#4a4a4a"></div>
<div class="t" style="left:921.00px;top:543.54px;font-size:11px;font-weight:normal;color:#222;-webkit-text-stroke:0.5px currentColor;">Коррекция</div>
<div class="a" style="left:982px;top:542px;width:49px;height:16px;background:linear-gradient(#9e9e9e,#8c8c8c)"></div>
<div class="a" style="left:1031px;top:542px;width:1px;height:16px;background:#4a4a4a"></div>
<div class="t" style="left:989.00px;top:543.54px;font-size:11px;font-weight:normal;color:#222;-webkit-text-stroke:0.5px currentColor;">Маски</div>
<div class="a" style="left:1031px;top:542px;width:39px;height:16px;background:linear-gradient(#e2e2e2,#d6d6d6)"></div>
<div class="a" style="left:1070px;top:542px;width:1px;height:16px;background:#4a4a4a"></div>
<div class="t" style="left:1038.00px;top:543.54px;font-size:11px;font-weight:normal;color:#222;transform:scaleX(0.9720);transform-origin:0 0;-webkit-text-stroke:0.5px currentColor;">Слои</div>
<svg class="a" style="left:1343px;top:547px;" width="15" height="9" viewBox="0 0 15 9"><path d="M0 3H5L2.5 6Z" fill="#222"/><rect x="6" y="0.5" width="8" height="1.2" fill="#222"/><rect x="6" y="2.8" width="8" height="1.2" fill="#222"/><rect x="6" y="5.1" width="8" height="1.2" fill="#222"/><rect x="6" y="7.4" width="8" height="1.2" fill="#222"/></svg>
<div class="a" style="left:914px;top:558px;width:117px;height:1px;background:#3a3a3a"></div>
<div class="a" style="left:1070px;top:558px;width:291px;height:1px;background:#3a3a3a"></div>
<div class="a" style="left:918px;top:563px;width:196px;height:18px;border:1px solid #555;background:#fff"></div>
<div class="t" style="left:922.00px;top:565.54px;font-size:11px;font-weight:normal;color:#111;transform:scaleX(0.9261);transform-origin:0 0;">Обычные</div>
<svg class="a" style="left:1100px;top:571px;" width="9" height="5" viewBox="0 0 9 5"><path d="M0.5 0.5L4.5 4.5L8.5 0.5" fill="none" stroke="#333" stroke-width="1.2"/></svg>
<div class="t" style="left:1116.70px;top:564.54px;font-size:11px;font-weight:normal;color:#111;transform:scaleX(0.9443);transform-origin:0 0;">Непрозрачность:</div>
<div class="a" style="left:1202px;top:563px;width:53px;height:18px;background:#fff;border:1px solid #8a8a8a"></div>
<div class="a" style="left:1239px;top:563px;width:16px;height:18px;background:linear-gradient(#f8f8f8,#e0e0e0);border:1px solid #8a8a8a"></div>
<svg class="a" style="left:1245px;top:569px;" width="4" height="7" viewBox="0 0 4 7"><path d="M0 0L4 3.5L0 7Z" fill="#111"/></svg>
<div class="t" style="left:1208.00px;top:566.54px;font-size:11px;font-weight:normal;color:#111;transform:scaleX(0.8531);transform-origin:0 0;">100%</div>
<div class="a" style="left:916px;top:583px;width:443px;height:1px;background:#b4b4b4"></div>
<div class="a" style="left:916px;top:584px;width:443px;height:1px;background:#eeeeee"></div>
<div class="t" style="left:921.70px;top:590.04px;font-size:11px;font-weight:normal;color:#111;transform:scaleX(0.9689);transform-origin:0 0;">Закрепить:</div>
<svg class="a" style="left:981px;top:591px;" width="13" height="13" viewBox="0 0 13 13"><rect x="0.5" y="0.5" width="12" height="12" fill="#fff" stroke="#333"/><rect x="2" y="2" width="3" height="3" fill="#bbb"/><rect x="8" y="2" width="3" height="3" fill="#bbb"/><rect x="5" y="5" width="3" height="3" fill="#bbb"/><rect x="2" y="8" width="3" height="3" fill="#bbb"/><rect x="8" y="8" width="3" height="3" fill="#bbb"/></svg>
<svg class="a" style="left:999px;top:590px;" width="14" height="15" viewBox="0 0 14 15"><path d="M13 1L6 9L7 10L14 2Z" fill="#222"/><path d="M0 14C3 14 5 13 6 11L5 9C3 9 1 11 0 14Z" fill="#222"/></svg>
<svg class="a" style="left:1017px;top:590px;" width="14" height="14" viewBox="0 0 14 14"><path d="M7 0.5V13.5M0.5 7H13.5" stroke="#111" stroke-width="1.3"/><path d="M7 0L4.5 3H9.5Z M7 14L4.5 11H9.5Z M0 7L3 4.5V9.5Z M14 7L11 4.5V9.5Z" fill="#111"/></svg>
<svg class="a" style="left:1036px;top:591px;" width="11" height="13" viewBox="0 0 11 13"><path d="M2.5 6V4A3 3 0 0 1 8.5 4V6" fill="none" stroke="#222" stroke-width="1.5"/><rect x="0.5" y="6" width="10" height="7" fill="#333"/><rect x="2" y="8" width="7" height="1" fill="#888"/><rect x="2" y="10" width="7" height="1" fill="#888"/></svg>
<div class="t" style="left:1156.70px;top:590.04px;font-size:11px;font-weight:normal;color:#111;transform:scaleX(0.9164);transform-origin:0 0;">Заливка:</div>
<div class="a" style="left:1202px;top:588px;width:53px;height:18px;background:#fff;border:1px solid #8a8a8a"></div>
<div class="a" style="left:1239px;top:588px;width:16px;height:18px;background:linear-gradient(#f8f8f8,#e0e0e0);border:1px solid #8a8a8a"></div>
<svg class="a" style="left:1245px;top:594px;" width="4" height="7" viewBox="0 0 4 7"><path d="M0 0L4 3.5L0 7Z" fill="#111"/></svg>
<div class="t" style="left:1208.00px;top:591.54px;font-size:11px;font-weight:normal;color:#111;transform:scaleX(0.8531);transform-origin:0 0;">100%</div>
<div class="a" style="left:916px;top:608px;width:443px;height:1px;background:#b4b4b4"></div>
<div class="a" style="left:916px;top:609px;width:443px;height:1px;background:#eeeeee"></div>
<div class="a" style="left:916px;top:610px;width:427px;height:95px;background:#d6d6d6"></div>
<div class="a" style="left:938px;top:610px;width:1px;height:95px;background:#a8a8a8"></div>
<div class="a" style="left:919px;top:621px;width:18px;height:16px;border:1px solid #b8b8b8;border-right-color:#f4f4f4;border-bottom-color:#f4f4f4"></div>
<div class="a" style="left:942px;top:613px;width:32px;height:32px;border:1px solid #111;background-color:#fff;background-image:linear-gradient(45deg,#cfcfcf 25%,transparent 25%,transparent 75%,#cfcfcf 75%),linear-gradient(45deg,#cfcfcf 25%,transparent 25%,transparent 75%,#cfcfcf 75%);background-size:8px 8px;background-position:0 0,4px 4px"></div>
<div class="t" style="left:982.30px;top:623.54px;font-size:11px;font-weight:normal;color:#111;transform:scaleX(0.9187);transform-origin:0 0;">Слой 0</div>
<div class="a" style="left:916px;top:648px;width:427px;height:1px;background:#9c9c9c"></div>
<div class="a" style="left:916px;top:649px;width:427px;height:1px;background:#ececec"></div>
<div class="a" style="left:916px;top:671px;width:427px;height:1px;background:#9c9c9c"></div>
<div class="a" style="left:916px;top:672px;width:427px;height:1px;background:#ececec"></div>
<div class="a" style="left:916px;top:694px;width:427px;height:1px;background:#9c9c9c"></div>
<div class="a" style="left:916px;top:695px;width:427px;height:1px;background:#ececec"></div>
<div class="a" style="left:919px;top:652px;width:18px;height:15px;border:1px solid #b8b8b8;border-right-color:#f4f4f4;border-bottom-color:#f4f4f4"></div>
<svg class="a" style="left:944px;top:657px;" width="7" height="10" viewBox="0 0 7 10"><path d="M1 0.5L6 5L1 9.5Z" fill="#f0f0ff" stroke="#20207a" stroke-width="1.1"/></svg>
<svg class="a" style="left:959px;top:655px;" width="17" height="13" viewBox="0 0 17 13"><path d="M0.5 2.5V12.5H16.5V3.5H7.5L6 1.5H1.5Z" fill="#c6c6c6" stroke="#6a6a6a"/><path d="M1 4.5H16" stroke="#e8e8e8"/></svg>
<div class="t" style="left:988.30px;top:654.54px;font-size:11px;font-weight:normal;color:#111;transform:scaleX(0.8471);transform-origin:0 0;">Reflect</div>
<div class="a" style="left:919px;top:675px;width:18px;height:15px;border:1px solid #b8b8b8;border-right-color:#f4f4f4;border-bottom-color:#f4f4f4"></div>
<svg class="a" style="left:944px;top:680px;" width="7" height="10" viewBox="0 0 7 10"><path d="M1 0.5L6 5L1 9.5Z" fill="#f0f0ff" stroke="#20207a" stroke-width="1.1"/></svg>
<svg class="a" style="left:959px;top:678px;" width="17" height="13" viewBox="0 0 17 13"><path d="M0.5 2.5V12.5H16.5V3.5H7.5L6 1.5H1.5Z" fill="#c6c6c6" stroke="#6a6a6a"/><path d="M1 4.5H16" stroke="#e8e8e8"/></svg>
<div class="t" style="left:988.30px;top:677.54px;font-size:11px;font-weight:normal;color:#111;transform:scaleX(0.9048);transform-origin:0 0;">Bump</div>
<svg class="a" style="left:919px;top:699px;" width="18" height="6" viewBox="0 0 18 6"><ellipse cx="9" cy="6" rx="7" ry="4" fill="#555"/></svg>
<div class="a" style="left:946px;top:703px;width:9px;height:2px;background:#444"></div>
<svg class="a" style="left:959px;top:700px;" width="17" height="5" viewBox="0 0 17 5"><path d="M0.5 5V1.5H6L7 0.5H16.5V5" fill="#d8d8d8" stroke="#777"/></svg>
<div class="a" style="left:988px;top:702px;width:24px;height:3px;background:#9a9a9a"></div>
<div class="a" style="left:1343px;top:610px;width:16px;height:95px;background:#f0f0f0"></div>
<svg class="a" style="left:1347px;top:615px;" width="9" height="6" viewBox="0 0 9 6"><path d="M0.5 5L4.5 1L8.5 5" fill="none" stroke="#222" stroke-width="1.4"/></svg>
<div class="a" style="left:1345px;top:627px;width:12px;height:20px;background:#cacaca"></div>
<svg class="a" style="left:1347px;top:694px;" width="9" height="6" viewBox="0 0 9 6"><path d="M0.5 1L4.5 5L8.5 1" fill="none" stroke="#222" stroke-width="1.4"/></svg>
<div class="a" style="left:914px;top:705px;width:447px;height:1px;background:#9a9a9a"></div>
<div class="a" style="left:914px;top:706px;width:447px;height:17px;background:#d6d6d6"></div>
<svg class="a" style="left:1158px;top:709px;" width="20" height="8" viewBox="0 0 20 8"><rect x="0.8" y="1" width="10" height="6" rx="3" fill="none" stroke="#555" stroke-width="1.6"/><rect x="8.5" y="1" width="10" height="6" rx="3" fill="none" stroke="#555" stroke-width="1.6"/></svg>
<div class="t" style="left:1187.00px;top:705.33px;font-size:14px;font-weight:bold;color:#222;font-family:"Liberation Serif",sans-serif;transform:scaleX(1.0290);transform-origin:0 0;font-style:italic;">fx</div>
<div class="a" style="left:1199px;top:716px;width:2px;height:2px;background:#222"></div>
<svg class="a" style="left:1216px;top:707px;" width="13" height="12" viewBox="0 0 13 12"><rect x="0.5" y="0.5" width="12" height="11" fill="#aaa" stroke="#222"/><circle cx="6.5" cy="6" r="3.8" fill="#fff" stroke="#222"/></svg>
<svg class="a" style="left:1243px;top:707px;" width="14" height="13" viewBox="0 0 14 13"><circle cx="6" cy="6" r="5.3" fill="#fff" stroke="#222" stroke-width="1.2"/><path d="M10.2 2.2A5.3 5.3 0 0 1 2 10Z" fill="#222"/><rect x="12" y="10" width="2" height="2" fill="#222"/></svg>
<svg class="a" style="left:1270px;top:708px;" width="13" height="10" viewBox="0 0 13 10"><path d="M0.5 1.5H5L6 2.5H12.5V9.5H0.5Z" fill="#eee" stroke="#444"/></svg>
<svg class="a" style="left:1298px;top:707px;" width="11" height="12" viewBox="0 0 11 12"><rect x="0.5" y="0.5" width="10" height="11" fill="#f4f4f4" stroke="#333"/><path d="M3 6H7V10" fill="none" stroke="#333"/></svg>
<svg class="a" style="left:1325px;top:706px;" width="12" height="14" viewBox="0 0 12 14"><rect x="1" y="2" width="10" height="2" fill="#444"/><rect x="4" y="0" width="4" height="2" fill="#444"/><path d="M2 4.5H10L9 13.5H3Z" fill="#ddd" stroke="#444"/><path d="M5 6V12M7 6V12" stroke="#444"/></svg>
<div class="a" style="left:0px;top:728px;width:1366px;height:40px;background:#050505"></div>
<svg class="a" style="left:16px;top:740px;" width="16" height="16" viewBox="0 0 16 16"><path d="M0 2.2L6.5 1.3V7.5H0Z M7.5 1.1L16 0V7.5H7.5Z M0 8.5H6.5V14.7L0 13.8Z M7.5 8.5H16V16L7.5 14.9Z" fill="#f4f4f4"/></svg>
<svg class="a" style="left:63px;top:739px;" width="17" height="17" viewBox="0 0 17 17"><circle cx="10" cy="6.5" r="5.3" fill="none" stroke="#f0f0f0" stroke-width="1.4"/><path d="M6.2 10.3L1 15.5" stroke="#f0f0f0" stroke-width="1.6"/></svg>
<svg class="a" style="left:110px;top:740px;" width="20" height="15" viewBox="0 0 20 15"><rect x="4.5" y="0.7" width="11" height="13.6" fill="none" stroke="#f0f0f0" stroke-width="1.3"/><path d="M1 3V12M19 3V12" stroke="#f0f0f0" stroke-width="1.3"/></svg>
<svg class="a" style="left:160px;top:738px;" width="22" height="19" viewBox="0 0 22 19"><path d="M0.5 2.5H8L10 4.5H21.5V18.5H0.5Z" fill="#e9c45a"/><rect x="0.5" y="6" width="21" height="12.5" fill="#f6d77a"/><rect x="5" y="11" width="12" height="7" fill="#3c8fd8"/><rect x="7" y="13" width="8" height="3" fill="#bfe0ff"/></svg>
<div class="a" style="left:151px;top:766px;width:39px;height:2px;background:#e8eec0"></div>
<svg class="a" style="left:208px;top:736px;" width="23" height="23" viewBox="0 0 23 23"><circle cx="11.5" cy="11.5" r="11" fill="#db4437"/><path d="M11.5 11.5L1.9 17A11 11 0 0 0 17 21Z" fill="#0f9d58"/><path d="M11.5 11.5L17 21A11 11 0 0 0 21.6 6H11.5Z" fill="#f4c20d"/><circle cx="11.5" cy="11.5" r="5" fill="#fff"/><circle cx="11.5" cy="11.5" r="3.8" fill="#4285f4"/></svg>
<div class="a" style="left:200px;top:766px;width:40px;height:2px;background:#e8eec0"></div>
<svg class="a" style="left:260px;top:737px;" width="18" height="21" viewBox="0 0 18 21"><rect x="0.5" y="0.5" width="17" height="20" fill="#f4f4f4"/><rect x="2" y="2" width="14" height="4" fill="#050505"/><rect x="2" y="8.0" width="2.5" height="2" fill="#050505"/><rect x="2" y="11.2" width="2.5" height="2" fill="#050505"/><rect x="2" y="14.4" width="2.5" height="2" fill="#050505"/><rect x="2" y="17.6" width="2.5" height="2" fill="#050505"/><rect x="6" y="8.0" width="2.5" height="2" fill="#050505"/><rect x="6" y="11.2" width="2.5" height="2" fill="#050505"/><rect x="6" y="14.4" width="2.5" height="2" fill="#050505"/><rect x="6" y="17.6" width="2.5" height="2" fill="#050505"/><rect x="10" y="8.0" width="2.5" height="2" fill="#050505"/><rect x="10" y="11.2" width="2.5" height="2" fill="#050505"/><rect x="10" y="14.4" width="2.5" height="2" fill="#050505"/><rect x="10" y="17.6" width="2.5" height="2" fill="#050505"/><rect x="14" y="8.0" width="2.5" height="2" fill="#050505"/><rect x="14" y="11.2" width="2.5" height="2" fill="#050505"/><rect x="14" y="14.4" width="2.5" height="2" fill="#050505"/><rect x="14" y="17.6" width="2.5" height="2" fill="#050505"/></svg>
<svg class="a" style="left:306px;top:737px;" width="24" height="22" viewBox="0 0 24 22"><ellipse cx="11" cy="9" rx="10.5" ry="8" fill="#f0f0f0" stroke="#b03030" stroke-width="1.5"/><path d="M4 6C8 3 14 3 18 7" stroke="#d05050" stroke-width="1.5" fill="none"/><circle cx="13" cy="18" r="2.5" fill="none" stroke="#2a7ad0" stroke-width="1.5"/><circle cx="19" cy="18" r="2.5" fill="none" stroke="#2a7ad0" stroke-width="1.5"/><path d="M8 7L14 16M16 8L17 16" stroke="#888" stroke-width="1.3"/></svg>
<svg class="a" style="left:355px;top:737px;" width="22" height="22" viewBox="0 0 22 22"><circle cx="11" cy="11" r="10.5" fill="#1aa3e8"/><circle cx="5" cy="5" r="4.5" fill="#1aa3e8"/><circle cx="17" cy="17" r="4.5" fill="#1aa3e8"/><path d="M14.5 7.5C13.5 6 8 5.5 7.8 8.3C7.6 11 14.3 10.5 14.4 13.5C14.5 16 8.8 16.3 7.3 14.5" fill="none" stroke="#fff" stroke-width="2.2" stroke-linecap="round"/></svg>
<div class="a" style="left:347px;top:766px;width:40px;height:2px;background:#e8eec0"></div>
<svg class="a" style="left:404px;top:738px;" width="22" height="20" viewBox="0 0 22 20"><rect x="0.5" y="0.5" width="21" height="15" fill="#2e8ed0"/><rect x="2" y="2" width="18" height="12" fill="#d7ecfa"/><circle cx="8" cy="8" r="4" fill="#1c6fb8"/><path d="M8 8V4A4 4 0 0 1 12 8Z" fill="#f0a030"/><rect x="13" y="4" width="6" height="1.5" fill="#1c6fb8"/><rect x="13" y="7" width="6" height="1.5" fill="#1c6fb8"/><rect x="13" y="10" width="6" height="1.5" fill="#1c6fb8"/><rect x="6" y="16" width="10" height="3" fill="#2e8ed0"/></svg>
<div class="a" style="left:399px;top:766px;width:31px;height:2px;background:#e8eec0"></div>
<svg class="a" style="left:455px;top:738px;" width="19" height="19" viewBox="0 0 19 19"><path d="M0 0H19V12L12 19H0Z" fill="#f8f8f8"/><path d="M12 19L19 12H12Z" fill="#050505"/></svg>
<div class="a" style="left:445px;top:766px;width:40px;height:2px;background:#e8eec0"></div>
<svg class="a" style="left:502px;top:736px;" width="24" height="23" viewBox="0 0 24 23"><rect x="9" y="3" width="14" height="17" fill="#f0f0f0" stroke="#1e7145"/><path d="M11 7H21M11 10H21M11 13H21M11 16H21M16 4V19" stroke="#1e7145" stroke-width="1"/><path d="M0 2L13 0V23L0 21Z" fill="#1e7145"/><path d="M3 6L9.5 17M9.5 6L3 17" stroke="#fff" stroke-width="2"/></svg>
<div class="a" style="left:493px;top:766px;width:41px;height:2px;background:#e8eec0"></div>
<svg class="a" style="left:550px;top:737px;" width="26" height="21" viewBox="0 0 26 21"><rect x="1" y="1" width="24" height="19" fill="#5aa0d8" stroke="#a8d8ff" stroke-width="1.5"/><path d="M2 14C8 9 14 10 24 13V19H2Z" fill="#4a8a6a"/><path d="M2 9C8 6 16 7 24 6V3H2Z" fill="#9ed0f4"/><path d="M0 0H5M0 0V5M26 0H21M26 0V5M0 21H5M0 21V16M26 21H21M26 21V16" stroke="#cfe8ff" stroke-width="2"/></svg>
<div class="a" style="left:543px;top:766px;width:40px;height:2px;background:#e8eec0"></div>
<div class="a" style="left:588px;top:728px;width:47px;height:40px;background:#3a3a3a"></div>
<svg class="a" style="left:600px;top:737px;" width="23" height="22" viewBox="0 0 23 22"><rect x="0" y="0" width="23" height="22" fill="#0a3f86"/><rect x="1.5" y="1.5" width="20" height="19" fill="#1b5fb8"/><rect x="1.5" y="1.5" width="20" height="2" fill="#3fa2f0"/></svg>
<div class="t" style="left:603.00px;top:743.14px;font-size:12px;font-weight:bold;color:#8fd0ff;transform:scaleX(1.0220);transform-origin:0 0;">Ps</div>
<div class="a" style="left:588px;top:766px;width:47px;height:2px;background:#e8eec0"></div>
<svg class="a" style="left:648px;top:735px;" width="26" height="25" viewBox="0 0 26 25"><rect x="0" y="0" width="26" height="25" fill="#1a9e9a"/><path d="M5 4L21 12.5L5 21L11 12.5Z" fill="#0a3a40"/><path d="M5 4L21 12.5L11 12.5Z" fill="#6ae0d8"/><rect x="7" y="19" width="13" height="4" fill="#bff"/></svg>
<div class="a" style="left:640px;top:766px;width:41px;height:2px;background:#e8eec0"></div>
<svg class="a" style="left:1083px;top:740px;" width="17" height="17" viewBox="0 0 17 17"><circle cx="12" cy="4.5" r="3.3" fill="none" stroke="#eee" stroke-width="1.3"/><path d="M6 12A6 6 0 0 1 17 11" fill="none" stroke="#eee" stroke-width="1.3"/><circle cx="5" cy="9" r="3.3" fill="none" stroke="#eee" stroke-width="1.3"/><path d="M0 17A5.5 5.5 0 0 1 10.5 16" fill="none" stroke="#eee" stroke-width="1.3"/></svg>
<svg class="a" style="left:1120px;top:745px;" width="14" height="8" viewBox="0 0 14 8"><path d="M1 7.5L7 1.5L13 7.5" fill="none" stroke="#eee" stroke-width="1.3"/></svg>
<svg class="a" style="left:1143px;top:741px;" width="18" height="14" viewBox="0 0 18 14"><rect x="4.5" y="3.5" width="12" height="8" fill="none" stroke="#eee" stroke-width="1.2"/><rect x="6" y="5" width="9" height="5" fill="#eee"/><rect x="16.5" y="6" width="1.5" height="3" fill="#eee"/><path d="M0 5H3M1.5 2V6M1.5 6V9H4" stroke="#eee" stroke-width="1.1" fill="none"/></svg>
<svg class="a" style="left:1168px;top:739px;" width="18" height="17" viewBox="0 0 18 17"><path d="M1 16A15 15 0 0 1 16 1M4.5 16A11.5 11.5 0 0 1 16 4.5M8 16A8 8 0 0 1 16 8M11.5 16A4.5 4.5 0 0 1 16 11.5" fill="none" stroke="#eee" stroke-width="1.2"/><circle cx="15" cy="15" r="1.8" fill="#eee"/></svg>
<svg class="a" style="left:1191px;top:740px;" width="17" height="17" viewBox="0 0 17 17"><path d="M1 6H4L9 1.5V15.5L4 11H1Z" fill="none" stroke="#eee" stroke-width="1.2"/><path d="M11.5 5.5A4 4 0 0 1 11.5 11.5M13.5 3.5A7 7 0 0 1 13.5 13.5M15.5 1.5A10 10 0 0 1 15.5 15.5" fill="none" stroke="#eee" stroke-width="1"/></svg>
<div class="t" style="left:1217.80px;top:741.64px;font-size:12px;font-weight:normal;color:#f0f0f0;transform:scaleX(0.8653);transform-origin:0 0;">ENG</div>
<div class="t" style="left:1266.30px;top:732.14px;font-size:12px;font-weight:normal;color:#f0f0f0;transform:scaleX(0.8825);transform-origin:0 0;">16:59</div>
<div class="t" style="left:1253.00px;top:750.14px;font-size:12px;font-weight:normal;color:#f0f0f0;transform:scaleX(0.8991);transform-origin:0 0;">17.04.2018</div>
<svg class="a" style="left:1325px;top:740px;" width="17" height="16" viewBox="0 0 17 16"><path d="M0.7 0.7H16.3V11.5H9.5L6.5 15V11.5H0.7Z" fill="none" stroke="#f0f0f0" stroke-width="1.3"/></svg>
</body></html>
